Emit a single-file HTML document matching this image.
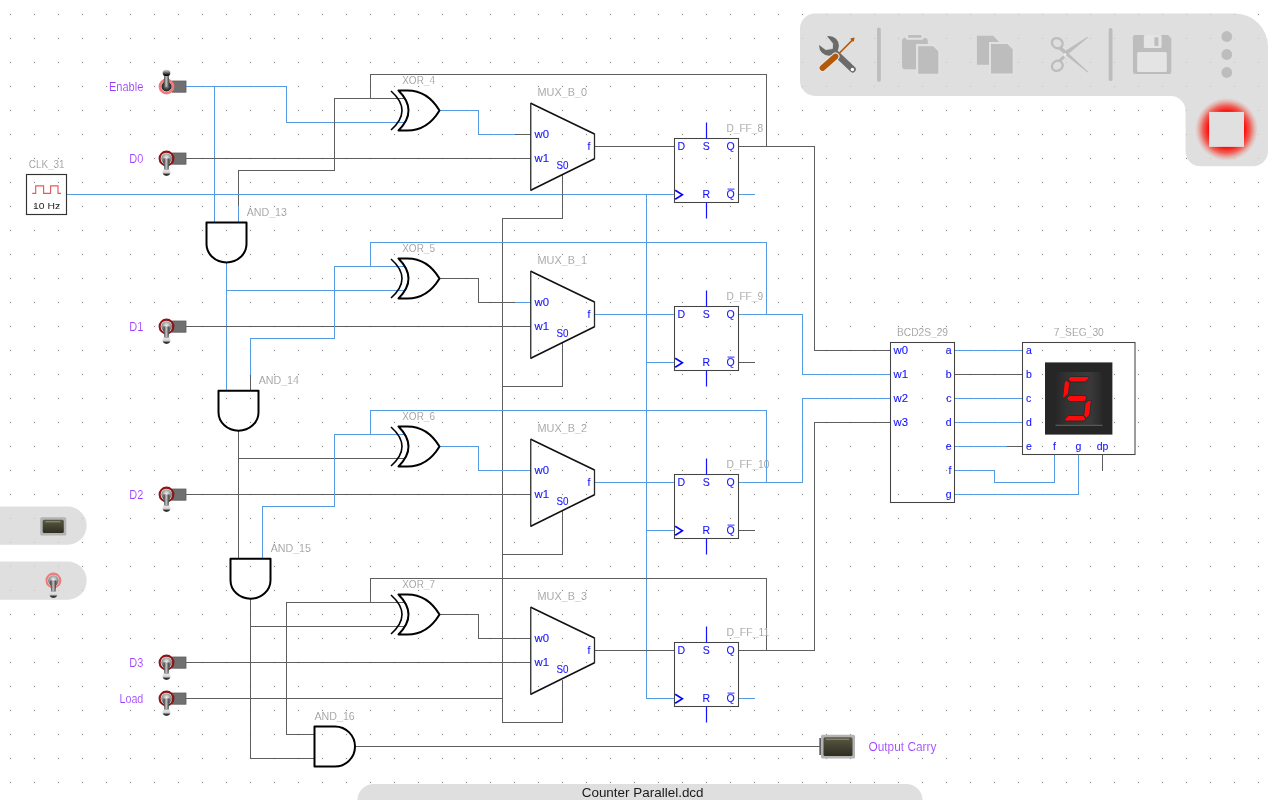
<!DOCTYPE html>
<html><head><meta charset="utf-8"><style>
html,body{margin:0;padding:0;background:#fff;width:1280px;height:800px;overflow:hidden}
svg{position:absolute;left:0;top:0;font-family:"Liberation Sans",sans-serif;will-change:transform}
</style></head><body>
<svg width="1280" height="800" viewBox="0 0 1280 800">
<defs>
<radialGradient id="tgDark" cx="0.5" cy="0.45" r="0.6"><stop offset="0" stop-color="#9a9a9a"/><stop offset="0.6" stop-color="#3a3a3a"/><stop offset="1" stop-color="#111"/></radialGradient>
<radialGradient id="tgLight" cx="0.5" cy="0.4" r="0.6"><stop offset="0" stop-color="#f0f0f0"/><stop offset="0.6" stop-color="#a0a0a0"/><stop offset="1" stop-color="#505050"/></radialGradient>
<linearGradient id="lev" x1="0" x2="1" y1="0" y2="0"><stop offset="0" stop-color="#222"/><stop offset="0.45" stop-color="#c8c8c8"/><stop offset="1" stop-color="#2a2a2a"/></linearGradient>
<linearGradient id="knob" x1="0" x2="0" y1="0" y2="1"><stop offset="0" stop-color="#8a8a8a"/><stop offset="0.25" stop-color="#e6e6e6"/><stop offset="0.55" stop-color="#cfcfcf"/><stop offset="0.8" stop-color="#3a3a3a"/><stop offset="1" stop-color="#000"/></linearGradient>
<linearGradient id="bez" x1="0" x2="1" y1="0" y2="0"><stop offset="0" stop-color="#262626"/><stop offset="0.25" stop-color="#333"/><stop offset="0.75" stop-color="#3a3a3a"/><stop offset="1" stop-color="#2a2a2a"/></linearGradient>
<linearGradient id="knobD" x1="0" x2="0" y1="0" y2="1"><stop offset="0" stop-color="#d8d8d8"/><stop offset="0.35" stop-color="#8a8a8a"/><stop offset="0.7" stop-color="#2a2a2a"/><stop offset="1" stop-color="#000"/></linearGradient>
<linearGradient id="ledg" x1="0" x2="0" y1="0" y2="1"><stop offset="0" stop-color="#5a5944"/><stop offset="1" stop-color="#2e2d20"/></linearGradient>
<radialGradient id="glow" cx="0.5" cy="0.5" r="0.5"><stop offset="0.55" stop-color="#ff0000" stop-opacity="1"/><stop offset="0.75" stop-color="#f42a1e" stop-opacity="0.7"/><stop offset="0.9" stop-color="#f04a3a" stop-opacity="0.25"/><stop offset="1" stop-color="#f05a4a" stop-opacity="0"/></radialGradient>
</defs>
<path d="M9 13h3v3h-3zM33 13h3v3h-3zM57 13h3v3h-3zM81 13h3v3h-3zM105 13h3v3h-3zM129 13h3v3h-3zM153 13h3v3h-3zM177 13h3v3h-3zM201 13h3v3h-3zM225 13h3v3h-3zM249 13h3v3h-3zM273 13h3v3h-3zM297 13h3v3h-3zM321 13h3v3h-3zM345 13h3v3h-3zM369 13h3v3h-3zM393 13h3v3h-3zM417 13h3v3h-3zM441 13h3v3h-3zM465 13h3v3h-3zM489 13h3v3h-3zM513 13h3v3h-3zM537 13h3v3h-3zM561 13h3v3h-3zM585 13h3v3h-3zM609 13h3v3h-3zM633 13h3v3h-3zM657 13h3v3h-3zM681 13h3v3h-3zM705 13h3v3h-3zM729 13h3v3h-3zM753 13h3v3h-3zM777 13h3v3h-3zM801 13h3v3h-3zM825 13h3v3h-3zM849 13h3v3h-3zM873 13h3v3h-3zM897 13h3v3h-3zM921 13h3v3h-3zM945 13h3v3h-3zM969 13h3v3h-3zM993 13h3v3h-3zM1017 13h3v3h-3zM1041 13h3v3h-3zM1065 13h3v3h-3zM1089 13h3v3h-3zM1113 13h3v3h-3zM1137 13h3v3h-3zM1161 13h3v3h-3zM1185 13h3v3h-3zM1209 13h3v3h-3zM1233 13h3v3h-3zM1257 13h3v3h-3zM1281 13h3v3h-3zM9 37h3v3h-3zM33 37h3v3h-3zM57 37h3v3h-3zM81 37h3v3h-3zM105 37h3v3h-3zM129 37h3v3h-3zM153 37h3v3h-3zM177 37h3v3h-3zM201 37h3v3h-3zM225 37h3v3h-3zM249 37h3v3h-3zM273 37h3v3h-3zM297 37h3v3h-3zM321 37h3v3h-3zM345 37h3v3h-3zM369 37h3v3h-3zM393 37h3v3h-3zM417 37h3v3h-3zM441 37h3v3h-3zM465 37h3v3h-3zM489 37h3v3h-3zM513 37h3v3h-3zM537 37h3v3h-3zM561 37h3v3h-3zM585 37h3v3h-3zM609 37h3v3h-3zM633 37h3v3h-3zM657 37h3v3h-3zM681 37h3v3h-3zM705 37h3v3h-3zM729 37h3v3h-3zM753 37h3v3h-3zM777 37h3v3h-3zM801 37h3v3h-3zM825 37h3v3h-3zM849 37h3v3h-3zM873 37h3v3h-3zM897 37h3v3h-3zM921 37h3v3h-3zM945 37h3v3h-3zM969 37h3v3h-3zM993 37h3v3h-3zM1017 37h3v3h-3zM1041 37h3v3h-3zM1065 37h3v3h-3zM1089 37h3v3h-3zM1113 37h3v3h-3zM1137 37h3v3h-3zM1161 37h3v3h-3zM1185 37h3v3h-3zM1209 37h3v3h-3zM1233 37h3v3h-3zM1257 37h3v3h-3zM1281 37h3v3h-3zM9 61h3v3h-3zM33 61h3v3h-3zM57 61h3v3h-3zM81 61h3v3h-3zM105 61h3v3h-3zM129 61h3v3h-3zM153 61h3v3h-3zM177 61h3v3h-3zM201 61h3v3h-3zM225 61h3v3h-3zM249 61h3v3h-3zM273 61h3v3h-3zM297 61h3v3h-3zM321 61h3v3h-3zM345 61h3v3h-3zM369 61h3v3h-3zM393 61h3v3h-3zM417 61h3v3h-3zM441 61h3v3h-3zM465 61h3v3h-3zM489 61h3v3h-3zM513 61h3v3h-3zM537 61h3v3h-3zM561 61h3v3h-3zM585 61h3v3h-3zM609 61h3v3h-3zM633 61h3v3h-3zM657 61h3v3h-3zM681 61h3v3h-3zM705 61h3v3h-3zM729 61h3v3h-3zM753 61h3v3h-3zM777 61h3v3h-3zM801 61h3v3h-3zM825 61h3v3h-3zM849 61h3v3h-3zM873 61h3v3h-3zM897 61h3v3h-3zM921 61h3v3h-3zM945 61h3v3h-3zM969 61h3v3h-3zM993 61h3v3h-3zM1017 61h3v3h-3zM1041 61h3v3h-3zM1065 61h3v3h-3zM1089 61h3v3h-3zM1113 61h3v3h-3zM1137 61h3v3h-3zM1161 61h3v3h-3zM1185 61h3v3h-3zM1209 61h3v3h-3zM1233 61h3v3h-3zM1257 61h3v3h-3zM1281 61h3v3h-3zM9 85h3v3h-3zM33 85h3v3h-3zM57 85h3v3h-3zM81 85h3v3h-3zM105 85h3v3h-3zM129 85h3v3h-3zM153 85h3v3h-3zM177 85h3v3h-3zM201 85h3v3h-3zM225 85h3v3h-3zM249 85h3v3h-3zM273 85h3v3h-3zM297 85h3v3h-3zM321 85h3v3h-3zM345 85h3v3h-3zM369 85h3v3h-3zM393 85h3v3h-3zM417 85h3v3h-3zM441 85h3v3h-3zM465 85h3v3h-3zM489 85h3v3h-3zM513 85h3v3h-3zM537 85h3v3h-3zM561 85h3v3h-3zM585 85h3v3h-3zM609 85h3v3h-3zM633 85h3v3h-3zM657 85h3v3h-3zM681 85h3v3h-3zM705 85h3v3h-3zM729 85h3v3h-3zM753 85h3v3h-3zM777 85h3v3h-3zM801 85h3v3h-3zM825 85h3v3h-3zM849 85h3v3h-3zM873 85h3v3h-3zM897 85h3v3h-3zM921 85h3v3h-3zM945 85h3v3h-3zM969 85h3v3h-3zM993 85h3v3h-3zM1017 85h3v3h-3zM1041 85h3v3h-3zM1065 85h3v3h-3zM1089 85h3v3h-3zM1113 85h3v3h-3zM1137 85h3v3h-3zM1161 85h3v3h-3zM1185 85h3v3h-3zM1209 85h3v3h-3zM1233 85h3v3h-3zM1257 85h3v3h-3zM1281 85h3v3h-3zM9 109h3v3h-3zM33 109h3v3h-3zM57 109h3v3h-3zM81 109h3v3h-3zM105 109h3v3h-3zM129 109h3v3h-3zM153 109h3v3h-3zM177 109h3v3h-3zM201 109h3v3h-3zM225 109h3v3h-3zM249 109h3v3h-3zM273 109h3v3h-3zM297 109h3v3h-3zM321 109h3v3h-3zM345 109h3v3h-3zM369 109h3v3h-3zM393 109h3v3h-3zM417 109h3v3h-3zM441 109h3v3h-3zM465 109h3v3h-3zM489 109h3v3h-3zM513 109h3v3h-3zM537 109h3v3h-3zM561 109h3v3h-3zM585 109h3v3h-3zM609 109h3v3h-3zM633 109h3v3h-3zM657 109h3v3h-3zM681 109h3v3h-3zM705 109h3v3h-3zM729 109h3v3h-3zM753 109h3v3h-3zM777 109h3v3h-3zM801 109h3v3h-3zM825 109h3v3h-3zM849 109h3v3h-3zM873 109h3v3h-3zM897 109h3v3h-3zM921 109h3v3h-3zM945 109h3v3h-3zM969 109h3v3h-3zM993 109h3v3h-3zM1017 109h3v3h-3zM1041 109h3v3h-3zM1065 109h3v3h-3zM1089 109h3v3h-3zM1113 109h3v3h-3zM1137 109h3v3h-3zM1161 109h3v3h-3zM1185 109h3v3h-3zM1209 109h3v3h-3zM1233 109h3v3h-3zM1257 109h3v3h-3zM1281 109h3v3h-3zM9 133h3v3h-3zM33 133h3v3h-3zM57 133h3v3h-3zM81 133h3v3h-3zM105 133h3v3h-3zM129 133h3v3h-3zM153 133h3v3h-3zM177 133h3v3h-3zM201 133h3v3h-3zM225 133h3v3h-3zM249 133h3v3h-3zM273 133h3v3h-3zM297 133h3v3h-3zM321 133h3v3h-3zM345 133h3v3h-3zM369 133h3v3h-3zM393 133h3v3h-3zM417 133h3v3h-3zM441 133h3v3h-3zM465 133h3v3h-3zM489 133h3v3h-3zM513 133h3v3h-3zM537 133h3v3h-3zM561 133h3v3h-3zM585 133h3v3h-3zM609 133h3v3h-3zM633 133h3v3h-3zM657 133h3v3h-3zM681 133h3v3h-3zM705 133h3v3h-3zM729 133h3v3h-3zM753 133h3v3h-3zM777 133h3v3h-3zM801 133h3v3h-3zM825 133h3v3h-3zM849 133h3v3h-3zM873 133h3v3h-3zM897 133h3v3h-3zM921 133h3v3h-3zM945 133h3v3h-3zM969 133h3v3h-3zM993 133h3v3h-3zM1017 133h3v3h-3zM1041 133h3v3h-3zM1065 133h3v3h-3zM1089 133h3v3h-3zM1113 133h3v3h-3zM1137 133h3v3h-3zM1161 133h3v3h-3zM1185 133h3v3h-3zM1209 133h3v3h-3zM1233 133h3v3h-3zM1257 133h3v3h-3zM1281 133h3v3h-3zM9 157h3v3h-3zM33 157h3v3h-3zM57 157h3v3h-3zM81 157h3v3h-3zM105 157h3v3h-3zM129 157h3v3h-3zM153 157h3v3h-3zM177 157h3v3h-3zM201 157h3v3h-3zM225 157h3v3h-3zM249 157h3v3h-3zM273 157h3v3h-3zM297 157h3v3h-3zM321 157h3v3h-3zM345 157h3v3h-3zM369 157h3v3h-3zM393 157h3v3h-3zM417 157h3v3h-3zM441 157h3v3h-3zM465 157h3v3h-3zM489 157h3v3h-3zM513 157h3v3h-3zM537 157h3v3h-3zM561 157h3v3h-3zM585 157h3v3h-3zM609 157h3v3h-3zM633 157h3v3h-3zM657 157h3v3h-3zM681 157h3v3h-3zM705 157h3v3h-3zM729 157h3v3h-3zM753 157h3v3h-3zM777 157h3v3h-3zM801 157h3v3h-3zM825 157h3v3h-3zM849 157h3v3h-3zM873 157h3v3h-3zM897 157h3v3h-3zM921 157h3v3h-3zM945 157h3v3h-3zM969 157h3v3h-3zM993 157h3v3h-3zM1017 157h3v3h-3zM1041 157h3v3h-3zM1065 157h3v3h-3zM1089 157h3v3h-3zM1113 157h3v3h-3zM1137 157h3v3h-3zM1161 157h3v3h-3zM1185 157h3v3h-3zM1209 157h3v3h-3zM1233 157h3v3h-3zM1257 157h3v3h-3zM1281 157h3v3h-3zM9 181h3v3h-3zM33 181h3v3h-3zM57 181h3v3h-3zM81 181h3v3h-3zM105 181h3v3h-3zM129 181h3v3h-3zM153 181h3v3h-3zM177 181h3v3h-3zM201 181h3v3h-3zM225 181h3v3h-3zM249 181h3v3h-3zM273 181h3v3h-3zM297 181h3v3h-3zM321 181h3v3h-3zM345 181h3v3h-3zM369 181h3v3h-3zM393 181h3v3h-3zM417 181h3v3h-3zM441 181h3v3h-3zM465 181h3v3h-3zM489 181h3v3h-3zM513 181h3v3h-3zM537 181h3v3h-3zM561 181h3v3h-3zM585 181h3v3h-3zM609 181h3v3h-3zM633 181h3v3h-3zM657 181h3v3h-3zM681 181h3v3h-3zM705 181h3v3h-3zM729 181h3v3h-3zM753 181h3v3h-3zM777 181h3v3h-3zM801 181h3v3h-3zM825 181h3v3h-3zM849 181h3v3h-3zM873 181h3v3h-3zM897 181h3v3h-3zM921 181h3v3h-3zM945 181h3v3h-3zM969 181h3v3h-3zM993 181h3v3h-3zM1017 181h3v3h-3zM1041 181h3v3h-3zM1065 181h3v3h-3zM1089 181h3v3h-3zM1113 181h3v3h-3zM1137 181h3v3h-3zM1161 181h3v3h-3zM1185 181h3v3h-3zM1209 181h3v3h-3zM1233 181h3v3h-3zM1257 181h3v3h-3zM1281 181h3v3h-3zM9 205h3v3h-3zM33 205h3v3h-3zM57 205h3v3h-3zM81 205h3v3h-3zM105 205h3v3h-3zM129 205h3v3h-3zM153 205h3v3h-3zM177 205h3v3h-3zM201 205h3v3h-3zM225 205h3v3h-3zM249 205h3v3h-3zM273 205h3v3h-3zM297 205h3v3h-3zM321 205h3v3h-3zM345 205h3v3h-3zM369 205h3v3h-3zM393 205h3v3h-3zM417 205h3v3h-3zM441 205h3v3h-3zM465 205h3v3h-3zM489 205h3v3h-3zM513 205h3v3h-3zM537 205h3v3h-3zM561 205h3v3h-3zM585 205h3v3h-3zM609 205h3v3h-3zM633 205h3v3h-3zM657 205h3v3h-3zM681 205h3v3h-3zM705 205h3v3h-3zM729 205h3v3h-3zM753 205h3v3h-3zM777 205h3v3h-3zM801 205h3v3h-3zM825 205h3v3h-3zM849 205h3v3h-3zM873 205h3v3h-3zM897 205h3v3h-3zM921 205h3v3h-3zM945 205h3v3h-3zM969 205h3v3h-3zM993 205h3v3h-3zM1017 205h3v3h-3zM1041 205h3v3h-3zM1065 205h3v3h-3zM1089 205h3v3h-3zM1113 205h3v3h-3zM1137 205h3v3h-3zM1161 205h3v3h-3zM1185 205h3v3h-3zM1209 205h3v3h-3zM1233 205h3v3h-3zM1257 205h3v3h-3zM1281 205h3v3h-3zM9 229h3v3h-3zM33 229h3v3h-3zM57 229h3v3h-3zM81 229h3v3h-3zM105 229h3v3h-3zM129 229h3v3h-3zM153 229h3v3h-3zM177 229h3v3h-3zM201 229h3v3h-3zM225 229h3v3h-3zM249 229h3v3h-3zM273 229h3v3h-3zM297 229h3v3h-3zM321 229h3v3h-3zM345 229h3v3h-3zM369 229h3v3h-3zM393 229h3v3h-3zM417 229h3v3h-3zM441 229h3v3h-3zM465 229h3v3h-3zM489 229h3v3h-3zM513 229h3v3h-3zM537 229h3v3h-3zM561 229h3v3h-3zM585 229h3v3h-3zM609 229h3v3h-3zM633 229h3v3h-3zM657 229h3v3h-3zM681 229h3v3h-3zM705 229h3v3h-3zM729 229h3v3h-3zM753 229h3v3h-3zM777 229h3v3h-3zM801 229h3v3h-3zM825 229h3v3h-3zM849 229h3v3h-3zM873 229h3v3h-3zM897 229h3v3h-3zM921 229h3v3h-3zM945 229h3v3h-3zM969 229h3v3h-3zM993 229h3v3h-3zM1017 229h3v3h-3zM1041 229h3v3h-3zM1065 229h3v3h-3zM1089 229h3v3h-3zM1113 229h3v3h-3zM1137 229h3v3h-3zM1161 229h3v3h-3zM1185 229h3v3h-3zM1209 229h3v3h-3zM1233 229h3v3h-3zM1257 229h3v3h-3zM1281 229h3v3h-3zM9 253h3v3h-3zM33 253h3v3h-3zM57 253h3v3h-3zM81 253h3v3h-3zM105 253h3v3h-3zM129 253h3v3h-3zM153 253h3v3h-3zM177 253h3v3h-3zM201 253h3v3h-3zM225 253h3v3h-3zM249 253h3v3h-3zM273 253h3v3h-3zM297 253h3v3h-3zM321 253h3v3h-3zM345 253h3v3h-3zM369 253h3v3h-3zM393 253h3v3h-3zM417 253h3v3h-3zM441 253h3v3h-3zM465 253h3v3h-3zM489 253h3v3h-3zM513 253h3v3h-3zM537 253h3v3h-3zM561 253h3v3h-3zM585 253h3v3h-3zM609 253h3v3h-3zM633 253h3v3h-3zM657 253h3v3h-3zM681 253h3v3h-3zM705 253h3v3h-3zM729 253h3v3h-3zM753 253h3v3h-3zM777 253h3v3h-3zM801 253h3v3h-3zM825 253h3v3h-3zM849 253h3v3h-3zM873 253h3v3h-3zM897 253h3v3h-3zM921 253h3v3h-3zM945 253h3v3h-3zM969 253h3v3h-3zM993 253h3v3h-3zM1017 253h3v3h-3zM1041 253h3v3h-3zM1065 253h3v3h-3zM1089 253h3v3h-3zM1113 253h3v3h-3zM1137 253h3v3h-3zM1161 253h3v3h-3zM1185 253h3v3h-3zM1209 253h3v3h-3zM1233 253h3v3h-3zM1257 253h3v3h-3zM1281 253h3v3h-3zM9 277h3v3h-3zM33 277h3v3h-3zM57 277h3v3h-3zM81 277h3v3h-3zM105 277h3v3h-3zM129 277h3v3h-3zM153 277h3v3h-3zM177 277h3v3h-3zM201 277h3v3h-3zM225 277h3v3h-3zM249 277h3v3h-3zM273 277h3v3h-3zM297 277h3v3h-3zM321 277h3v3h-3zM345 277h3v3h-3zM369 277h3v3h-3zM393 277h3v3h-3zM417 277h3v3h-3zM441 277h3v3h-3zM465 277h3v3h-3zM489 277h3v3h-3zM513 277h3v3h-3zM537 277h3v3h-3zM561 277h3v3h-3zM585 277h3v3h-3zM609 277h3v3h-3zM633 277h3v3h-3zM657 277h3v3h-3zM681 277h3v3h-3zM705 277h3v3h-3zM729 277h3v3h-3zM753 277h3v3h-3zM777 277h3v3h-3zM801 277h3v3h-3zM825 277h3v3h-3zM849 277h3v3h-3zM873 277h3v3h-3zM897 277h3v3h-3zM921 277h3v3h-3zM945 277h3v3h-3zM969 277h3v3h-3zM993 277h3v3h-3zM1017 277h3v3h-3zM1041 277h3v3h-3zM1065 277h3v3h-3zM1089 277h3v3h-3zM1113 277h3v3h-3zM1137 277h3v3h-3zM1161 277h3v3h-3zM1185 277h3v3h-3zM1209 277h3v3h-3zM1233 277h3v3h-3zM1257 277h3v3h-3zM1281 277h3v3h-3zM9 301h3v3h-3zM33 301h3v3h-3zM57 301h3v3h-3zM81 301h3v3h-3zM105 301h3v3h-3zM129 301h3v3h-3zM153 301h3v3h-3zM177 301h3v3h-3zM201 301h3v3h-3zM225 301h3v3h-3zM249 301h3v3h-3zM273 301h3v3h-3zM297 301h3v3h-3zM321 301h3v3h-3zM345 301h3v3h-3zM369 301h3v3h-3zM393 301h3v3h-3zM417 301h3v3h-3zM441 301h3v3h-3zM465 301h3v3h-3zM489 301h3v3h-3zM513 301h3v3h-3zM537 301h3v3h-3zM561 301h3v3h-3zM585 301h3v3h-3zM609 301h3v3h-3zM633 301h3v3h-3zM657 301h3v3h-3zM681 301h3v3h-3zM705 301h3v3h-3zM729 301h3v3h-3zM753 301h3v3h-3zM777 301h3v3h-3zM801 301h3v3h-3zM825 301h3v3h-3zM849 301h3v3h-3zM873 301h3v3h-3zM897 301h3v3h-3zM921 301h3v3h-3zM945 301h3v3h-3zM969 301h3v3h-3zM993 301h3v3h-3zM1017 301h3v3h-3zM1041 301h3v3h-3zM1065 301h3v3h-3zM1089 301h3v3h-3zM1113 301h3v3h-3zM1137 301h3v3h-3zM1161 301h3v3h-3zM1185 301h3v3h-3zM1209 301h3v3h-3zM1233 301h3v3h-3zM1257 301h3v3h-3zM1281 301h3v3h-3zM9 325h3v3h-3zM33 325h3v3h-3zM57 325h3v3h-3zM81 325h3v3h-3zM105 325h3v3h-3zM129 325h3v3h-3zM153 325h3v3h-3zM177 325h3v3h-3zM201 325h3v3h-3zM225 325h3v3h-3zM249 325h3v3h-3zM273 325h3v3h-3zM297 325h3v3h-3zM321 325h3v3h-3zM345 325h3v3h-3zM369 325h3v3h-3zM393 325h3v3h-3zM417 325h3v3h-3zM441 325h3v3h-3zM465 325h3v3h-3zM489 325h3v3h-3zM513 325h3v3h-3zM537 325h3v3h-3zM561 325h3v3h-3zM585 325h3v3h-3zM609 325h3v3h-3zM633 325h3v3h-3zM657 325h3v3h-3zM681 325h3v3h-3zM705 325h3v3h-3zM729 325h3v3h-3zM753 325h3v3h-3zM777 325h3v3h-3zM801 325h3v3h-3zM825 325h3v3h-3zM849 325h3v3h-3zM873 325h3v3h-3zM897 325h3v3h-3zM921 325h3v3h-3zM945 325h3v3h-3zM969 325h3v3h-3zM993 325h3v3h-3zM1017 325h3v3h-3zM1041 325h3v3h-3zM1065 325h3v3h-3zM1089 325h3v3h-3zM1113 325h3v3h-3zM1137 325h3v3h-3zM1161 325h3v3h-3zM1185 325h3v3h-3zM1209 325h3v3h-3zM1233 325h3v3h-3zM1257 325h3v3h-3zM1281 325h3v3h-3zM9 349h3v3h-3zM33 349h3v3h-3zM57 349h3v3h-3zM81 349h3v3h-3zM105 349h3v3h-3zM129 349h3v3h-3zM153 349h3v3h-3zM177 349h3v3h-3zM201 349h3v3h-3zM225 349h3v3h-3zM249 349h3v3h-3zM273 349h3v3h-3zM297 349h3v3h-3zM321 349h3v3h-3zM345 349h3v3h-3zM369 349h3v3h-3zM393 349h3v3h-3zM417 349h3v3h-3zM441 349h3v3h-3zM465 349h3v3h-3zM489 349h3v3h-3zM513 349h3v3h-3zM537 349h3v3h-3zM561 349h3v3h-3zM585 349h3v3h-3zM609 349h3v3h-3zM633 349h3v3h-3zM657 349h3v3h-3zM681 349h3v3h-3zM705 349h3v3h-3zM729 349h3v3h-3zM753 349h3v3h-3zM777 349h3v3h-3zM801 349h3v3h-3zM825 349h3v3h-3zM849 349h3v3h-3zM873 349h3v3h-3zM897 349h3v3h-3zM921 349h3v3h-3zM945 349h3v3h-3zM969 349h3v3h-3zM993 349h3v3h-3zM1017 349h3v3h-3zM1041 349h3v3h-3zM1065 349h3v3h-3zM1089 349h3v3h-3zM1113 349h3v3h-3zM1137 349h3v3h-3zM1161 349h3v3h-3zM1185 349h3v3h-3zM1209 349h3v3h-3zM1233 349h3v3h-3zM1257 349h3v3h-3zM1281 349h3v3h-3zM9 373h3v3h-3zM33 373h3v3h-3zM57 373h3v3h-3zM81 373h3v3h-3zM105 373h3v3h-3zM129 373h3v3h-3zM153 373h3v3h-3zM177 373h3v3h-3zM201 373h3v3h-3zM225 373h3v3h-3zM249 373h3v3h-3zM273 373h3v3h-3zM297 373h3v3h-3zM321 373h3v3h-3zM345 373h3v3h-3zM369 373h3v3h-3zM393 373h3v3h-3zM417 373h3v3h-3zM441 373h3v3h-3zM465 373h3v3h-3zM489 373h3v3h-3zM513 373h3v3h-3zM537 373h3v3h-3zM561 373h3v3h-3zM585 373h3v3h-3zM609 373h3v3h-3zM633 373h3v3h-3zM657 373h3v3h-3zM681 373h3v3h-3zM705 373h3v3h-3zM729 373h3v3h-3zM753 373h3v3h-3zM777 373h3v3h-3zM801 373h3v3h-3zM825 373h3v3h-3zM849 373h3v3h-3zM873 373h3v3h-3zM897 373h3v3h-3zM921 373h3v3h-3zM945 373h3v3h-3zM969 373h3v3h-3zM993 373h3v3h-3zM1017 373h3v3h-3zM1041 373h3v3h-3zM1065 373h3v3h-3zM1089 373h3v3h-3zM1113 373h3v3h-3zM1137 373h3v3h-3zM1161 373h3v3h-3zM1185 373h3v3h-3zM1209 373h3v3h-3zM1233 373h3v3h-3zM1257 373h3v3h-3zM1281 373h3v3h-3zM9 397h3v3h-3zM33 397h3v3h-3zM57 397h3v3h-3zM81 397h3v3h-3zM105 397h3v3h-3zM129 397h3v3h-3zM153 397h3v3h-3zM177 397h3v3h-3zM201 397h3v3h-3zM225 397h3v3h-3zM249 397h3v3h-3zM273 397h3v3h-3zM297 397h3v3h-3zM321 397h3v3h-3zM345 397h3v3h-3zM369 397h3v3h-3zM393 397h3v3h-3zM417 397h3v3h-3zM441 397h3v3h-3zM465 397h3v3h-3zM489 397h3v3h-3zM513 397h3v3h-3zM537 397h3v3h-3zM561 397h3v3h-3zM585 397h3v3h-3zM609 397h3v3h-3zM633 397h3v3h-3zM657 397h3v3h-3zM681 397h3v3h-3zM705 397h3v3h-3zM729 397h3v3h-3zM753 397h3v3h-3zM777 397h3v3h-3zM801 397h3v3h-3zM825 397h3v3h-3zM849 397h3v3h-3zM873 397h3v3h-3zM897 397h3v3h-3zM921 397h3v3h-3zM945 397h3v3h-3zM969 397h3v3h-3zM993 397h3v3h-3zM1017 397h3v3h-3zM1041 397h3v3h-3zM1065 397h3v3h-3zM1089 397h3v3h-3zM1113 397h3v3h-3zM1137 397h3v3h-3zM1161 397h3v3h-3zM1185 397h3v3h-3zM1209 397h3v3h-3zM1233 397h3v3h-3zM1257 397h3v3h-3zM1281 397h3v3h-3zM9 421h3v3h-3zM33 421h3v3h-3zM57 421h3v3h-3zM81 421h3v3h-3zM105 421h3v3h-3zM129 421h3v3h-3zM153 421h3v3h-3zM177 421h3v3h-3zM201 421h3v3h-3zM225 421h3v3h-3zM249 421h3v3h-3zM273 421h3v3h-3zM297 421h3v3h-3zM321 421h3v3h-3zM345 421h3v3h-3zM369 421h3v3h-3zM393 421h3v3h-3zM417 421h3v3h-3zM441 421h3v3h-3zM465 421h3v3h-3zM489 421h3v3h-3zM513 421h3v3h-3zM537 421h3v3h-3zM561 421h3v3h-3zM585 421h3v3h-3zM609 421h3v3h-3zM633 421h3v3h-3zM657 421h3v3h-3zM681 421h3v3h-3zM705 421h3v3h-3zM729 421h3v3h-3zM753 421h3v3h-3zM777 421h3v3h-3zM801 421h3v3h-3zM825 421h3v3h-3zM849 421h3v3h-3zM873 421h3v3h-3zM897 421h3v3h-3zM921 421h3v3h-3zM945 421h3v3h-3zM969 421h3v3h-3zM993 421h3v3h-3zM1017 421h3v3h-3zM1041 421h3v3h-3zM1065 421h3v3h-3zM1089 421h3v3h-3zM1113 421h3v3h-3zM1137 421h3v3h-3zM1161 421h3v3h-3zM1185 421h3v3h-3zM1209 421h3v3h-3zM1233 421h3v3h-3zM1257 421h3v3h-3zM1281 421h3v3h-3zM9 445h3v3h-3zM33 445h3v3h-3zM57 445h3v3h-3zM81 445h3v3h-3zM105 445h3v3h-3zM129 445h3v3h-3zM153 445h3v3h-3zM177 445h3v3h-3zM201 445h3v3h-3zM225 445h3v3h-3zM249 445h3v3h-3zM273 445h3v3h-3zM297 445h3v3h-3zM321 445h3v3h-3zM345 445h3v3h-3zM369 445h3v3h-3zM393 445h3v3h-3zM417 445h3v3h-3zM441 445h3v3h-3zM465 445h3v3h-3zM489 445h3v3h-3zM513 445h3v3h-3zM537 445h3v3h-3zM561 445h3v3h-3zM585 445h3v3h-3zM609 445h3v3h-3zM633 445h3v3h-3zM657 445h3v3h-3zM681 445h3v3h-3zM705 445h3v3h-3zM729 445h3v3h-3zM753 445h3v3h-3zM777 445h3v3h-3zM801 445h3v3h-3zM825 445h3v3h-3zM849 445h3v3h-3zM873 445h3v3h-3zM897 445h3v3h-3zM921 445h3v3h-3zM945 445h3v3h-3zM969 445h3v3h-3zM993 445h3v3h-3zM1017 445h3v3h-3zM1041 445h3v3h-3zM1065 445h3v3h-3zM1089 445h3v3h-3zM1113 445h3v3h-3zM1137 445h3v3h-3zM1161 445h3v3h-3zM1185 445h3v3h-3zM1209 445h3v3h-3zM1233 445h3v3h-3zM1257 445h3v3h-3zM1281 445h3v3h-3zM9 469h3v3h-3zM33 469h3v3h-3zM57 469h3v3h-3zM81 469h3v3h-3zM105 469h3v3h-3zM129 469h3v3h-3zM153 469h3v3h-3zM177 469h3v3h-3zM201 469h3v3h-3zM225 469h3v3h-3zM249 469h3v3h-3zM273 469h3v3h-3zM297 469h3v3h-3zM321 469h3v3h-3zM345 469h3v3h-3zM369 469h3v3h-3zM393 469h3v3h-3zM417 469h3v3h-3zM441 469h3v3h-3zM465 469h3v3h-3zM489 469h3v3h-3zM513 469h3v3h-3zM537 469h3v3h-3zM561 469h3v3h-3zM585 469h3v3h-3zM609 469h3v3h-3zM633 469h3v3h-3zM657 469h3v3h-3zM681 469h3v3h-3zM705 469h3v3h-3zM729 469h3v3h-3zM753 469h3v3h-3zM777 469h3v3h-3zM801 469h3v3h-3zM825 469h3v3h-3zM849 469h3v3h-3zM873 469h3v3h-3zM897 469h3v3h-3zM921 469h3v3h-3zM945 469h3v3h-3zM969 469h3v3h-3zM993 469h3v3h-3zM1017 469h3v3h-3zM1041 469h3v3h-3zM1065 469h3v3h-3zM1089 469h3v3h-3zM1113 469h3v3h-3zM1137 469h3v3h-3zM1161 469h3v3h-3zM1185 469h3v3h-3zM1209 469h3v3h-3zM1233 469h3v3h-3zM1257 469h3v3h-3zM1281 469h3v3h-3zM9 493h3v3h-3zM33 493h3v3h-3zM57 493h3v3h-3zM81 493h3v3h-3zM105 493h3v3h-3zM129 493h3v3h-3zM153 493h3v3h-3zM177 493h3v3h-3zM201 493h3v3h-3zM225 493h3v3h-3zM249 493h3v3h-3zM273 493h3v3h-3zM297 493h3v3h-3zM321 493h3v3h-3zM345 493h3v3h-3zM369 493h3v3h-3zM393 493h3v3h-3zM417 493h3v3h-3zM441 493h3v3h-3zM465 493h3v3h-3zM489 493h3v3h-3zM513 493h3v3h-3zM537 493h3v3h-3zM561 493h3v3h-3zM585 493h3v3h-3zM609 493h3v3h-3zM633 493h3v3h-3zM657 493h3v3h-3zM681 493h3v3h-3zM705 493h3v3h-3zM729 493h3v3h-3zM753 493h3v3h-3zM777 493h3v3h-3zM801 493h3v3h-3zM825 493h3v3h-3zM849 493h3v3h-3zM873 493h3v3h-3zM897 493h3v3h-3zM921 493h3v3h-3zM945 493h3v3h-3zM969 493h3v3h-3zM993 493h3v3h-3zM1017 493h3v3h-3zM1041 493h3v3h-3zM1065 493h3v3h-3zM1089 493h3v3h-3zM1113 493h3v3h-3zM1137 493h3v3h-3zM1161 493h3v3h-3zM1185 493h3v3h-3zM1209 493h3v3h-3zM1233 493h3v3h-3zM1257 493h3v3h-3zM1281 493h3v3h-3zM9 517h3v3h-3zM33 517h3v3h-3zM57 517h3v3h-3zM81 517h3v3h-3zM105 517h3v3h-3zM129 517h3v3h-3zM153 517h3v3h-3zM177 517h3v3h-3zM201 517h3v3h-3zM225 517h3v3h-3zM249 517h3v3h-3zM273 517h3v3h-3zM297 517h3v3h-3zM321 517h3v3h-3zM345 517h3v3h-3zM369 517h3v3h-3zM393 517h3v3h-3zM417 517h3v3h-3zM441 517h3v3h-3zM465 517h3v3h-3zM489 517h3v3h-3zM513 517h3v3h-3zM537 517h3v3h-3zM561 517h3v3h-3zM585 517h3v3h-3zM609 517h3v3h-3zM633 517h3v3h-3zM657 517h3v3h-3zM681 517h3v3h-3zM705 517h3v3h-3zM729 517h3v3h-3zM753 517h3v3h-3zM777 517h3v3h-3zM801 517h3v3h-3zM825 517h3v3h-3zM849 517h3v3h-3zM873 517h3v3h-3zM897 517h3v3h-3zM921 517h3v3h-3zM945 517h3v3h-3zM969 517h3v3h-3zM993 517h3v3h-3zM1017 517h3v3h-3zM1041 517h3v3h-3zM1065 517h3v3h-3zM1089 517h3v3h-3zM1113 517h3v3h-3zM1137 517h3v3h-3zM1161 517h3v3h-3zM1185 517h3v3h-3zM1209 517h3v3h-3zM1233 517h3v3h-3zM1257 517h3v3h-3zM1281 517h3v3h-3zM9 541h3v3h-3zM33 541h3v3h-3zM57 541h3v3h-3zM81 541h3v3h-3zM105 541h3v3h-3zM129 541h3v3h-3zM153 541h3v3h-3zM177 541h3v3h-3zM201 541h3v3h-3zM225 541h3v3h-3zM249 541h3v3h-3zM273 541h3v3h-3zM297 541h3v3h-3zM321 541h3v3h-3zM345 541h3v3h-3zM369 541h3v3h-3zM393 541h3v3h-3zM417 541h3v3h-3zM441 541h3v3h-3zM465 541h3v3h-3zM489 541h3v3h-3zM513 541h3v3h-3zM537 541h3v3h-3zM561 541h3v3h-3zM585 541h3v3h-3zM609 541h3v3h-3zM633 541h3v3h-3zM657 541h3v3h-3zM681 541h3v3h-3zM705 541h3v3h-3zM729 541h3v3h-3zM753 541h3v3h-3zM777 541h3v3h-3zM801 541h3v3h-3zM825 541h3v3h-3zM849 541h3v3h-3zM873 541h3v3h-3zM897 541h3v3h-3zM921 541h3v3h-3zM945 541h3v3h-3zM969 541h3v3h-3zM993 541h3v3h-3zM1017 541h3v3h-3zM1041 541h3v3h-3zM1065 541h3v3h-3zM1089 541h3v3h-3zM1113 541h3v3h-3zM1137 541h3v3h-3zM1161 541h3v3h-3zM1185 541h3v3h-3zM1209 541h3v3h-3zM1233 541h3v3h-3zM1257 541h3v3h-3zM1281 541h3v3h-3zM9 565h3v3h-3zM33 565h3v3h-3zM57 565h3v3h-3zM81 565h3v3h-3zM105 565h3v3h-3zM129 565h3v3h-3zM153 565h3v3h-3zM177 565h3v3h-3zM201 565h3v3h-3zM225 565h3v3h-3zM249 565h3v3h-3zM273 565h3v3h-3zM297 565h3v3h-3zM321 565h3v3h-3zM345 565h3v3h-3zM369 565h3v3h-3zM393 565h3v3h-3zM417 565h3v3h-3zM441 565h3v3h-3zM465 565h3v3h-3zM489 565h3v3h-3zM513 565h3v3h-3zM537 565h3v3h-3zM561 565h3v3h-3zM585 565h3v3h-3zM609 565h3v3h-3zM633 565h3v3h-3zM657 565h3v3h-3zM681 565h3v3h-3zM705 565h3v3h-3zM729 565h3v3h-3zM753 565h3v3h-3zM777 565h3v3h-3zM801 565h3v3h-3zM825 565h3v3h-3zM849 565h3v3h-3zM873 565h3v3h-3zM897 565h3v3h-3zM921 565h3v3h-3zM945 565h3v3h-3zM969 565h3v3h-3zM993 565h3v3h-3zM1017 565h3v3h-3zM1041 565h3v3h-3zM1065 565h3v3h-3zM1089 565h3v3h-3zM1113 565h3v3h-3zM1137 565h3v3h-3zM1161 565h3v3h-3zM1185 565h3v3h-3zM1209 565h3v3h-3zM1233 565h3v3h-3zM1257 565h3v3h-3zM1281 565h3v3h-3zM9 589h3v3h-3zM33 589h3v3h-3zM57 589h3v3h-3zM81 589h3v3h-3zM105 589h3v3h-3zM129 589h3v3h-3zM153 589h3v3h-3zM177 589h3v3h-3zM201 589h3v3h-3zM225 589h3v3h-3zM249 589h3v3h-3zM273 589h3v3h-3zM297 589h3v3h-3zM321 589h3v3h-3zM345 589h3v3h-3zM369 589h3v3h-3zM393 589h3v3h-3zM417 589h3v3h-3zM441 589h3v3h-3zM465 589h3v3h-3zM489 589h3v3h-3zM513 589h3v3h-3zM537 589h3v3h-3zM561 589h3v3h-3zM585 589h3v3h-3zM609 589h3v3h-3zM633 589h3v3h-3zM657 589h3v3h-3zM681 589h3v3h-3zM705 589h3v3h-3zM729 589h3v3h-3zM753 589h3v3h-3zM777 589h3v3h-3zM801 589h3v3h-3zM825 589h3v3h-3zM849 589h3v3h-3zM873 589h3v3h-3zM897 589h3v3h-3zM921 589h3v3h-3zM945 589h3v3h-3zM969 589h3v3h-3zM993 589h3v3h-3zM1017 589h3v3h-3zM1041 589h3v3h-3zM1065 589h3v3h-3zM1089 589h3v3h-3zM1113 589h3v3h-3zM1137 589h3v3h-3zM1161 589h3v3h-3zM1185 589h3v3h-3zM1209 589h3v3h-3zM1233 589h3v3h-3zM1257 589h3v3h-3zM1281 589h3v3h-3zM9 613h3v3h-3zM33 613h3v3h-3zM57 613h3v3h-3zM81 613h3v3h-3zM105 613h3v3h-3zM129 613h3v3h-3zM153 613h3v3h-3zM177 613h3v3h-3zM201 613h3v3h-3zM225 613h3v3h-3zM249 613h3v3h-3zM273 613h3v3h-3zM297 613h3v3h-3zM321 613h3v3h-3zM345 613h3v3h-3zM369 613h3v3h-3zM393 613h3v3h-3zM417 613h3v3h-3zM441 613h3v3h-3zM465 613h3v3h-3zM489 613h3v3h-3zM513 613h3v3h-3zM537 613h3v3h-3zM561 613h3v3h-3zM585 613h3v3h-3zM609 613h3v3h-3zM633 613h3v3h-3zM657 613h3v3h-3zM681 613h3v3h-3zM705 613h3v3h-3zM729 613h3v3h-3zM753 613h3v3h-3zM777 613h3v3h-3zM801 613h3v3h-3zM825 613h3v3h-3zM849 613h3v3h-3zM873 613h3v3h-3zM897 613h3v3h-3zM921 613h3v3h-3zM945 613h3v3h-3zM969 613h3v3h-3zM993 613h3v3h-3zM1017 613h3v3h-3zM1041 613h3v3h-3zM1065 613h3v3h-3zM1089 613h3v3h-3zM1113 613h3v3h-3zM1137 613h3v3h-3zM1161 613h3v3h-3zM1185 613h3v3h-3zM1209 613h3v3h-3zM1233 613h3v3h-3zM1257 613h3v3h-3zM1281 613h3v3h-3zM9 637h3v3h-3zM33 637h3v3h-3zM57 637h3v3h-3zM81 637h3v3h-3zM105 637h3v3h-3zM129 637h3v3h-3zM153 637h3v3h-3zM177 637h3v3h-3zM201 637h3v3h-3zM225 637h3v3h-3zM249 637h3v3h-3zM273 637h3v3h-3zM297 637h3v3h-3zM321 637h3v3h-3zM345 637h3v3h-3zM369 637h3v3h-3zM393 637h3v3h-3zM417 637h3v3h-3zM441 637h3v3h-3zM465 637h3v3h-3zM489 637h3v3h-3zM513 637h3v3h-3zM537 637h3v3h-3zM561 637h3v3h-3zM585 637h3v3h-3zM609 637h3v3h-3zM633 637h3v3h-3zM657 637h3v3h-3zM681 637h3v3h-3zM705 637h3v3h-3zM729 637h3v3h-3zM753 637h3v3h-3zM777 637h3v3h-3zM801 637h3v3h-3zM825 637h3v3h-3zM849 637h3v3h-3zM873 637h3v3h-3zM897 637h3v3h-3zM921 637h3v3h-3zM945 637h3v3h-3zM969 637h3v3h-3zM993 637h3v3h-3zM1017 637h3v3h-3zM1041 637h3v3h-3zM1065 637h3v3h-3zM1089 637h3v3h-3zM1113 637h3v3h-3zM1137 637h3v3h-3zM1161 637h3v3h-3zM1185 637h3v3h-3zM1209 637h3v3h-3zM1233 637h3v3h-3zM1257 637h3v3h-3zM1281 637h3v3h-3zM9 661h3v3h-3zM33 661h3v3h-3zM57 661h3v3h-3zM81 661h3v3h-3zM105 661h3v3h-3zM129 661h3v3h-3zM153 661h3v3h-3zM177 661h3v3h-3zM201 661h3v3h-3zM225 661h3v3h-3zM249 661h3v3h-3zM273 661h3v3h-3zM297 661h3v3h-3zM321 661h3v3h-3zM345 661h3v3h-3zM369 661h3v3h-3zM393 661h3v3h-3zM417 661h3v3h-3zM441 661h3v3h-3zM465 661h3v3h-3zM489 661h3v3h-3zM513 661h3v3h-3zM537 661h3v3h-3zM561 661h3v3h-3zM585 661h3v3h-3zM609 661h3v3h-3zM633 661h3v3h-3zM657 661h3v3h-3zM681 661h3v3h-3zM705 661h3v3h-3zM729 661h3v3h-3zM753 661h3v3h-3zM777 661h3v3h-3zM801 661h3v3h-3zM825 661h3v3h-3zM849 661h3v3h-3zM873 661h3v3h-3zM897 661h3v3h-3zM921 661h3v3h-3zM945 661h3v3h-3zM969 661h3v3h-3zM993 661h3v3h-3zM1017 661h3v3h-3zM1041 661h3v3h-3zM1065 661h3v3h-3zM1089 661h3v3h-3zM1113 661h3v3h-3zM1137 661h3v3h-3zM1161 661h3v3h-3zM1185 661h3v3h-3zM1209 661h3v3h-3zM1233 661h3v3h-3zM1257 661h3v3h-3zM1281 661h3v3h-3zM9 685h3v3h-3zM33 685h3v3h-3zM57 685h3v3h-3zM81 685h3v3h-3zM105 685h3v3h-3zM129 685h3v3h-3zM153 685h3v3h-3zM177 685h3v3h-3zM201 685h3v3h-3zM225 685h3v3h-3zM249 685h3v3h-3zM273 685h3v3h-3zM297 685h3v3h-3zM321 685h3v3h-3zM345 685h3v3h-3zM369 685h3v3h-3zM393 685h3v3h-3zM417 685h3v3h-3zM441 685h3v3h-3zM465 685h3v3h-3zM489 685h3v3h-3zM513 685h3v3h-3zM537 685h3v3h-3zM561 685h3v3h-3zM585 685h3v3h-3zM609 685h3v3h-3zM633 685h3v3h-3zM657 685h3v3h-3zM681 685h3v3h-3zM705 685h3v3h-3zM729 685h3v3h-3zM753 685h3v3h-3zM777 685h3v3h-3zM801 685h3v3h-3zM825 685h3v3h-3zM849 685h3v3h-3zM873 685h3v3h-3zM897 685h3v3h-3zM921 685h3v3h-3zM945 685h3v3h-3zM969 685h3v3h-3zM993 685h3v3h-3zM1017 685h3v3h-3zM1041 685h3v3h-3zM1065 685h3v3h-3zM1089 685h3v3h-3zM1113 685h3v3h-3zM1137 685h3v3h-3zM1161 685h3v3h-3zM1185 685h3v3h-3zM1209 685h3v3h-3zM1233 685h3v3h-3zM1257 685h3v3h-3zM1281 685h3v3h-3zM9 709h3v3h-3zM33 709h3v3h-3zM57 709h3v3h-3zM81 709h3v3h-3zM105 709h3v3h-3zM129 709h3v3h-3zM153 709h3v3h-3zM177 709h3v3h-3zM201 709h3v3h-3zM225 709h3v3h-3zM249 709h3v3h-3zM273 709h3v3h-3zM297 709h3v3h-3zM321 709h3v3h-3zM345 709h3v3h-3zM369 709h3v3h-3zM393 709h3v3h-3zM417 709h3v3h-3zM441 709h3v3h-3zM465 709h3v3h-3zM489 709h3v3h-3zM513 709h3v3h-3zM537 709h3v3h-3zM561 709h3v3h-3zM585 709h3v3h-3zM609 709h3v3h-3zM633 709h3v3h-3zM657 709h3v3h-3zM681 709h3v3h-3zM705 709h3v3h-3zM729 709h3v3h-3zM753 709h3v3h-3zM777 709h3v3h-3zM801 709h3v3h-3zM825 709h3v3h-3zM849 709h3v3h-3zM873 709h3v3h-3zM897 709h3v3h-3zM921 709h3v3h-3zM945 709h3v3h-3zM969 709h3v3h-3zM993 709h3v3h-3zM1017 709h3v3h-3zM1041 709h3v3h-3zM1065 709h3v3h-3zM1089 709h3v3h-3zM1113 709h3v3h-3zM1137 709h3v3h-3zM1161 709h3v3h-3zM1185 709h3v3h-3zM1209 709h3v3h-3zM1233 709h3v3h-3zM1257 709h3v3h-3zM1281 709h3v3h-3zM9 733h3v3h-3zM33 733h3v3h-3zM57 733h3v3h-3zM81 733h3v3h-3zM105 733h3v3h-3zM129 733h3v3h-3zM153 733h3v3h-3zM177 733h3v3h-3zM201 733h3v3h-3zM225 733h3v3h-3zM249 733h3v3h-3zM273 733h3v3h-3zM297 733h3v3h-3zM321 733h3v3h-3zM345 733h3v3h-3zM369 733h3v3h-3zM393 733h3v3h-3zM417 733h3v3h-3zM441 733h3v3h-3zM465 733h3v3h-3zM489 733h3v3h-3zM513 733h3v3h-3zM537 733h3v3h-3zM561 733h3v3h-3zM585 733h3v3h-3zM609 733h3v3h-3zM633 733h3v3h-3zM657 733h3v3h-3zM681 733h3v3h-3zM705 733h3v3h-3zM729 733h3v3h-3zM753 733h3v3h-3zM777 733h3v3h-3zM801 733h3v3h-3zM825 733h3v3h-3zM849 733h3v3h-3zM873 733h3v3h-3zM897 733h3v3h-3zM921 733h3v3h-3zM945 733h3v3h-3zM969 733h3v3h-3zM993 733h3v3h-3zM1017 733h3v3h-3zM1041 733h3v3h-3zM1065 733h3v3h-3zM1089 733h3v3h-3zM1113 733h3v3h-3zM1137 733h3v3h-3zM1161 733h3v3h-3zM1185 733h3v3h-3zM1209 733h3v3h-3zM1233 733h3v3h-3zM1257 733h3v3h-3zM1281 733h3v3h-3zM9 757h3v3h-3zM33 757h3v3h-3zM57 757h3v3h-3zM81 757h3v3h-3zM105 757h3v3h-3zM129 757h3v3h-3zM153 757h3v3h-3zM177 757h3v3h-3zM201 757h3v3h-3zM225 757h3v3h-3zM249 757h3v3h-3zM273 757h3v3h-3zM297 757h3v3h-3zM321 757h3v3h-3zM345 757h3v3h-3zM369 757h3v3h-3zM393 757h3v3h-3zM417 757h3v3h-3zM441 757h3v3h-3zM465 757h3v3h-3zM489 757h3v3h-3zM513 757h3v3h-3zM537 757h3v3h-3zM561 757h3v3h-3zM585 757h3v3h-3zM609 757h3v3h-3zM633 757h3v3h-3zM657 757h3v3h-3zM681 757h3v3h-3zM705 757h3v3h-3zM729 757h3v3h-3zM753 757h3v3h-3zM777 757h3v3h-3zM801 757h3v3h-3zM825 757h3v3h-3zM849 757h3v3h-3zM873 757h3v3h-3zM897 757h3v3h-3zM921 757h3v3h-3zM945 757h3v3h-3zM969 757h3v3h-3zM993 757h3v3h-3zM1017 757h3v3h-3zM1041 757h3v3h-3zM1065 757h3v3h-3zM1089 757h3v3h-3zM1113 757h3v3h-3zM1137 757h3v3h-3zM1161 757h3v3h-3zM1185 757h3v3h-3zM1209 757h3v3h-3zM1233 757h3v3h-3zM1257 757h3v3h-3zM1281 757h3v3h-3zM9 781h3v3h-3zM33 781h3v3h-3zM57 781h3v3h-3zM81 781h3v3h-3zM105 781h3v3h-3zM129 781h3v3h-3zM153 781h3v3h-3zM177 781h3v3h-3zM201 781h3v3h-3zM225 781h3v3h-3zM249 781h3v3h-3zM273 781h3v3h-3zM297 781h3v3h-3zM321 781h3v3h-3zM345 781h3v3h-3zM369 781h3v3h-3zM393 781h3v3h-3zM417 781h3v3h-3zM441 781h3v3h-3zM465 781h3v3h-3zM489 781h3v3h-3zM513 781h3v3h-3zM537 781h3v3h-3zM561 781h3v3h-3zM585 781h3v3h-3zM609 781h3v3h-3zM633 781h3v3h-3zM657 781h3v3h-3zM681 781h3v3h-3zM705 781h3v3h-3zM729 781h3v3h-3zM753 781h3v3h-3zM777 781h3v3h-3zM801 781h3v3h-3zM825 781h3v3h-3zM849 781h3v3h-3zM873 781h3v3h-3zM897 781h3v3h-3zM921 781h3v3h-3zM945 781h3v3h-3zM969 781h3v3h-3zM993 781h3v3h-3zM1017 781h3v3h-3zM1041 781h3v3h-3zM1065 781h3v3h-3zM1089 781h3v3h-3zM1113 781h3v3h-3zM1137 781h3v3h-3zM1161 781h3v3h-3zM1185 781h3v3h-3zM1209 781h3v3h-3zM1233 781h3v3h-3zM1257 781h3v3h-3zM1281 781h3v3h-3zM9 805h3v3h-3zM33 805h3v3h-3zM57 805h3v3h-3zM81 805h3v3h-3zM105 805h3v3h-3zM129 805h3v3h-3zM153 805h3v3h-3zM177 805h3v3h-3zM201 805h3v3h-3zM225 805h3v3h-3zM249 805h3v3h-3zM273 805h3v3h-3zM297 805h3v3h-3zM321 805h3v3h-3zM345 805h3v3h-3zM369 805h3v3h-3zM393 805h3v3h-3zM417 805h3v3h-3zM441 805h3v3h-3zM465 805h3v3h-3zM489 805h3v3h-3zM513 805h3v3h-3zM537 805h3v3h-3zM561 805h3v3h-3zM585 805h3v3h-3zM609 805h3v3h-3zM633 805h3v3h-3zM657 805h3v3h-3zM681 805h3v3h-3zM705 805h3v3h-3zM729 805h3v3h-3zM753 805h3v3h-3zM777 805h3v3h-3zM801 805h3v3h-3zM825 805h3v3h-3zM849 805h3v3h-3zM873 805h3v3h-3zM897 805h3v3h-3zM921 805h3v3h-3zM945 805h3v3h-3zM969 805h3v3h-3zM993 805h3v3h-3zM1017 805h3v3h-3zM1041 805h3v3h-3zM1065 805h3v3h-3zM1089 805h3v3h-3zM1113 805h3v3h-3zM1137 805h3v3h-3zM1161 805h3v3h-3zM1185 805h3v3h-3zM1209 805h3v3h-3zM1233 805h3v3h-3zM1257 805h3v3h-3zM1281 805h3v3h-3z" fill="#f9f9f9"/><path d="M10 14h1v1h-1zM34 14h1v1h-1zM58 14h1v1h-1zM82 14h1v1h-1zM106 14h1v1h-1zM130 14h1v1h-1zM154 14h1v1h-1zM178 14h1v1h-1zM202 14h1v1h-1zM226 14h1v1h-1zM250 14h1v1h-1zM274 14h1v1h-1zM298 14h1v1h-1zM322 14h1v1h-1zM346 14h1v1h-1zM370 14h1v1h-1zM394 14h1v1h-1zM418 14h1v1h-1zM442 14h1v1h-1zM466 14h1v1h-1zM490 14h1v1h-1zM514 14h1v1h-1zM538 14h1v1h-1zM562 14h1v1h-1zM586 14h1v1h-1zM610 14h1v1h-1zM634 14h1v1h-1zM658 14h1v1h-1zM682 14h1v1h-1zM706 14h1v1h-1zM730 14h1v1h-1zM754 14h1v1h-1zM778 14h1v1h-1zM802 14h1v1h-1zM826 14h1v1h-1zM850 14h1v1h-1zM874 14h1v1h-1zM898 14h1v1h-1zM922 14h1v1h-1zM946 14h1v1h-1zM970 14h1v1h-1zM994 14h1v1h-1zM1018 14h1v1h-1zM1042 14h1v1h-1zM1066 14h1v1h-1zM1090 14h1v1h-1zM1114 14h1v1h-1zM1138 14h1v1h-1zM1162 14h1v1h-1zM1186 14h1v1h-1zM1210 14h1v1h-1zM1234 14h1v1h-1zM1258 14h1v1h-1zM1282 14h1v1h-1zM10 38h1v1h-1zM34 38h1v1h-1zM58 38h1v1h-1zM82 38h1v1h-1zM106 38h1v1h-1zM130 38h1v1h-1zM154 38h1v1h-1zM178 38h1v1h-1zM202 38h1v1h-1zM226 38h1v1h-1zM250 38h1v1h-1zM274 38h1v1h-1zM298 38h1v1h-1zM322 38h1v1h-1zM346 38h1v1h-1zM370 38h1v1h-1zM394 38h1v1h-1zM418 38h1v1h-1zM442 38h1v1h-1zM466 38h1v1h-1zM490 38h1v1h-1zM514 38h1v1h-1zM538 38h1v1h-1zM562 38h1v1h-1zM586 38h1v1h-1zM610 38h1v1h-1zM634 38h1v1h-1zM658 38h1v1h-1zM682 38h1v1h-1zM706 38h1v1h-1zM730 38h1v1h-1zM754 38h1v1h-1zM778 38h1v1h-1zM802 38h1v1h-1zM826 38h1v1h-1zM850 38h1v1h-1zM874 38h1v1h-1zM898 38h1v1h-1zM922 38h1v1h-1zM946 38h1v1h-1zM970 38h1v1h-1zM994 38h1v1h-1zM1018 38h1v1h-1zM1042 38h1v1h-1zM1066 38h1v1h-1zM1090 38h1v1h-1zM1114 38h1v1h-1zM1138 38h1v1h-1zM1162 38h1v1h-1zM1186 38h1v1h-1zM1210 38h1v1h-1zM1234 38h1v1h-1zM1258 38h1v1h-1zM1282 38h1v1h-1zM10 62h1v1h-1zM34 62h1v1h-1zM58 62h1v1h-1zM82 62h1v1h-1zM106 62h1v1h-1zM130 62h1v1h-1zM154 62h1v1h-1zM178 62h1v1h-1zM202 62h1v1h-1zM226 62h1v1h-1zM250 62h1v1h-1zM274 62h1v1h-1zM298 62h1v1h-1zM322 62h1v1h-1zM346 62h1v1h-1zM370 62h1v1h-1zM394 62h1v1h-1zM418 62h1v1h-1zM442 62h1v1h-1zM466 62h1v1h-1zM490 62h1v1h-1zM514 62h1v1h-1zM538 62h1v1h-1zM562 62h1v1h-1zM586 62h1v1h-1zM610 62h1v1h-1zM634 62h1v1h-1zM658 62h1v1h-1zM682 62h1v1h-1zM706 62h1v1h-1zM730 62h1v1h-1zM754 62h1v1h-1zM778 62h1v1h-1zM802 62h1v1h-1zM826 62h1v1h-1zM850 62h1v1h-1zM874 62h1v1h-1zM898 62h1v1h-1zM922 62h1v1h-1zM946 62h1v1h-1zM970 62h1v1h-1zM994 62h1v1h-1zM1018 62h1v1h-1zM1042 62h1v1h-1zM1066 62h1v1h-1zM1090 62h1v1h-1zM1114 62h1v1h-1zM1138 62h1v1h-1zM1162 62h1v1h-1zM1186 62h1v1h-1zM1210 62h1v1h-1zM1234 62h1v1h-1zM1258 62h1v1h-1zM1282 62h1v1h-1zM10 86h1v1h-1zM34 86h1v1h-1zM58 86h1v1h-1zM82 86h1v1h-1zM106 86h1v1h-1zM130 86h1v1h-1zM154 86h1v1h-1zM178 86h1v1h-1zM202 86h1v1h-1zM226 86h1v1h-1zM250 86h1v1h-1zM274 86h1v1h-1zM298 86h1v1h-1zM322 86h1v1h-1zM346 86h1v1h-1zM370 86h1v1h-1zM394 86h1v1h-1zM418 86h1v1h-1zM442 86h1v1h-1zM466 86h1v1h-1zM490 86h1v1h-1zM514 86h1v1h-1zM538 86h1v1h-1zM562 86h1v1h-1zM586 86h1v1h-1zM610 86h1v1h-1zM634 86h1v1h-1zM658 86h1v1h-1zM682 86h1v1h-1zM706 86h1v1h-1zM730 86h1v1h-1zM754 86h1v1h-1zM778 86h1v1h-1zM802 86h1v1h-1zM826 86h1v1h-1zM850 86h1v1h-1zM874 86h1v1h-1zM898 86h1v1h-1zM922 86h1v1h-1zM946 86h1v1h-1zM970 86h1v1h-1zM994 86h1v1h-1zM1018 86h1v1h-1zM1042 86h1v1h-1zM1066 86h1v1h-1zM1090 86h1v1h-1zM1114 86h1v1h-1zM1138 86h1v1h-1zM1162 86h1v1h-1zM1186 86h1v1h-1zM1210 86h1v1h-1zM1234 86h1v1h-1zM1258 86h1v1h-1zM1282 86h1v1h-1zM10 110h1v1h-1zM34 110h1v1h-1zM58 110h1v1h-1zM82 110h1v1h-1zM106 110h1v1h-1zM130 110h1v1h-1zM154 110h1v1h-1zM178 110h1v1h-1zM202 110h1v1h-1zM226 110h1v1h-1zM250 110h1v1h-1zM274 110h1v1h-1zM298 110h1v1h-1zM322 110h1v1h-1zM346 110h1v1h-1zM370 110h1v1h-1zM394 110h1v1h-1zM418 110h1v1h-1zM442 110h1v1h-1zM466 110h1v1h-1zM490 110h1v1h-1zM514 110h1v1h-1zM538 110h1v1h-1zM562 110h1v1h-1zM586 110h1v1h-1zM610 110h1v1h-1zM634 110h1v1h-1zM658 110h1v1h-1zM682 110h1v1h-1zM706 110h1v1h-1zM730 110h1v1h-1zM754 110h1v1h-1zM778 110h1v1h-1zM802 110h1v1h-1zM826 110h1v1h-1zM850 110h1v1h-1zM874 110h1v1h-1zM898 110h1v1h-1zM922 110h1v1h-1zM946 110h1v1h-1zM970 110h1v1h-1zM994 110h1v1h-1zM1018 110h1v1h-1zM1042 110h1v1h-1zM1066 110h1v1h-1zM1090 110h1v1h-1zM1114 110h1v1h-1zM1138 110h1v1h-1zM1162 110h1v1h-1zM1186 110h1v1h-1zM1210 110h1v1h-1zM1234 110h1v1h-1zM1258 110h1v1h-1zM1282 110h1v1h-1zM10 134h1v1h-1zM34 134h1v1h-1zM58 134h1v1h-1zM82 134h1v1h-1zM106 134h1v1h-1zM130 134h1v1h-1zM154 134h1v1h-1zM178 134h1v1h-1zM202 134h1v1h-1zM226 134h1v1h-1zM250 134h1v1h-1zM274 134h1v1h-1zM298 134h1v1h-1zM322 134h1v1h-1zM346 134h1v1h-1zM370 134h1v1h-1zM394 134h1v1h-1zM418 134h1v1h-1zM442 134h1v1h-1zM466 134h1v1h-1zM490 134h1v1h-1zM514 134h1v1h-1zM538 134h1v1h-1zM562 134h1v1h-1zM586 134h1v1h-1zM610 134h1v1h-1zM634 134h1v1h-1zM658 134h1v1h-1zM682 134h1v1h-1zM706 134h1v1h-1zM730 134h1v1h-1zM754 134h1v1h-1zM778 134h1v1h-1zM802 134h1v1h-1zM826 134h1v1h-1zM850 134h1v1h-1zM874 134h1v1h-1zM898 134h1v1h-1zM922 134h1v1h-1zM946 134h1v1h-1zM970 134h1v1h-1zM994 134h1v1h-1zM1018 134h1v1h-1zM1042 134h1v1h-1zM1066 134h1v1h-1zM1090 134h1v1h-1zM1114 134h1v1h-1zM1138 134h1v1h-1zM1162 134h1v1h-1zM1186 134h1v1h-1zM1210 134h1v1h-1zM1234 134h1v1h-1zM1258 134h1v1h-1zM1282 134h1v1h-1zM10 158h1v1h-1zM34 158h1v1h-1zM58 158h1v1h-1zM82 158h1v1h-1zM106 158h1v1h-1zM130 158h1v1h-1zM154 158h1v1h-1zM178 158h1v1h-1zM202 158h1v1h-1zM226 158h1v1h-1zM250 158h1v1h-1zM274 158h1v1h-1zM298 158h1v1h-1zM322 158h1v1h-1zM346 158h1v1h-1zM370 158h1v1h-1zM394 158h1v1h-1zM418 158h1v1h-1zM442 158h1v1h-1zM466 158h1v1h-1zM490 158h1v1h-1zM514 158h1v1h-1zM538 158h1v1h-1zM562 158h1v1h-1zM586 158h1v1h-1zM610 158h1v1h-1zM634 158h1v1h-1zM658 158h1v1h-1zM682 158h1v1h-1zM706 158h1v1h-1zM730 158h1v1h-1zM754 158h1v1h-1zM778 158h1v1h-1zM802 158h1v1h-1zM826 158h1v1h-1zM850 158h1v1h-1zM874 158h1v1h-1zM898 158h1v1h-1zM922 158h1v1h-1zM946 158h1v1h-1zM970 158h1v1h-1zM994 158h1v1h-1zM1018 158h1v1h-1zM1042 158h1v1h-1zM1066 158h1v1h-1zM1090 158h1v1h-1zM1114 158h1v1h-1zM1138 158h1v1h-1zM1162 158h1v1h-1zM1186 158h1v1h-1zM1210 158h1v1h-1zM1234 158h1v1h-1zM1258 158h1v1h-1zM1282 158h1v1h-1zM10 182h1v1h-1zM34 182h1v1h-1zM58 182h1v1h-1zM82 182h1v1h-1zM106 182h1v1h-1zM130 182h1v1h-1zM154 182h1v1h-1zM178 182h1v1h-1zM202 182h1v1h-1zM226 182h1v1h-1zM250 182h1v1h-1zM274 182h1v1h-1zM298 182h1v1h-1zM322 182h1v1h-1zM346 182h1v1h-1zM370 182h1v1h-1zM394 182h1v1h-1zM418 182h1v1h-1zM442 182h1v1h-1zM466 182h1v1h-1zM490 182h1v1h-1zM514 182h1v1h-1zM538 182h1v1h-1zM562 182h1v1h-1zM586 182h1v1h-1zM610 182h1v1h-1zM634 182h1v1h-1zM658 182h1v1h-1zM682 182h1v1h-1zM706 182h1v1h-1zM730 182h1v1h-1zM754 182h1v1h-1zM778 182h1v1h-1zM802 182h1v1h-1zM826 182h1v1h-1zM850 182h1v1h-1zM874 182h1v1h-1zM898 182h1v1h-1zM922 182h1v1h-1zM946 182h1v1h-1zM970 182h1v1h-1zM994 182h1v1h-1zM1018 182h1v1h-1zM1042 182h1v1h-1zM1066 182h1v1h-1zM1090 182h1v1h-1zM1114 182h1v1h-1zM1138 182h1v1h-1zM1162 182h1v1h-1zM1186 182h1v1h-1zM1210 182h1v1h-1zM1234 182h1v1h-1zM1258 182h1v1h-1zM1282 182h1v1h-1zM10 206h1v1h-1zM34 206h1v1h-1zM58 206h1v1h-1zM82 206h1v1h-1zM106 206h1v1h-1zM130 206h1v1h-1zM154 206h1v1h-1zM178 206h1v1h-1zM202 206h1v1h-1zM226 206h1v1h-1zM250 206h1v1h-1zM274 206h1v1h-1zM298 206h1v1h-1zM322 206h1v1h-1zM346 206h1v1h-1zM370 206h1v1h-1zM394 206h1v1h-1zM418 206h1v1h-1zM442 206h1v1h-1zM466 206h1v1h-1zM490 206h1v1h-1zM514 206h1v1h-1zM538 206h1v1h-1zM562 206h1v1h-1zM586 206h1v1h-1zM610 206h1v1h-1zM634 206h1v1h-1zM658 206h1v1h-1zM682 206h1v1h-1zM706 206h1v1h-1zM730 206h1v1h-1zM754 206h1v1h-1zM778 206h1v1h-1zM802 206h1v1h-1zM826 206h1v1h-1zM850 206h1v1h-1zM874 206h1v1h-1zM898 206h1v1h-1zM922 206h1v1h-1zM946 206h1v1h-1zM970 206h1v1h-1zM994 206h1v1h-1zM1018 206h1v1h-1zM1042 206h1v1h-1zM1066 206h1v1h-1zM1090 206h1v1h-1zM1114 206h1v1h-1zM1138 206h1v1h-1zM1162 206h1v1h-1zM1186 206h1v1h-1zM1210 206h1v1h-1zM1234 206h1v1h-1zM1258 206h1v1h-1zM1282 206h1v1h-1zM10 230h1v1h-1zM34 230h1v1h-1zM58 230h1v1h-1zM82 230h1v1h-1zM106 230h1v1h-1zM130 230h1v1h-1zM154 230h1v1h-1zM178 230h1v1h-1zM202 230h1v1h-1zM226 230h1v1h-1zM250 230h1v1h-1zM274 230h1v1h-1zM298 230h1v1h-1zM322 230h1v1h-1zM346 230h1v1h-1zM370 230h1v1h-1zM394 230h1v1h-1zM418 230h1v1h-1zM442 230h1v1h-1zM466 230h1v1h-1zM490 230h1v1h-1zM514 230h1v1h-1zM538 230h1v1h-1zM562 230h1v1h-1zM586 230h1v1h-1zM610 230h1v1h-1zM634 230h1v1h-1zM658 230h1v1h-1zM682 230h1v1h-1zM706 230h1v1h-1zM730 230h1v1h-1zM754 230h1v1h-1zM778 230h1v1h-1zM802 230h1v1h-1zM826 230h1v1h-1zM850 230h1v1h-1zM874 230h1v1h-1zM898 230h1v1h-1zM922 230h1v1h-1zM946 230h1v1h-1zM970 230h1v1h-1zM994 230h1v1h-1zM1018 230h1v1h-1zM1042 230h1v1h-1zM1066 230h1v1h-1zM1090 230h1v1h-1zM1114 230h1v1h-1zM1138 230h1v1h-1zM1162 230h1v1h-1zM1186 230h1v1h-1zM1210 230h1v1h-1zM1234 230h1v1h-1zM1258 230h1v1h-1zM1282 230h1v1h-1zM10 254h1v1h-1zM34 254h1v1h-1zM58 254h1v1h-1zM82 254h1v1h-1zM106 254h1v1h-1zM130 254h1v1h-1zM154 254h1v1h-1zM178 254h1v1h-1zM202 254h1v1h-1zM226 254h1v1h-1zM250 254h1v1h-1zM274 254h1v1h-1zM298 254h1v1h-1zM322 254h1v1h-1zM346 254h1v1h-1zM370 254h1v1h-1zM394 254h1v1h-1zM418 254h1v1h-1zM442 254h1v1h-1zM466 254h1v1h-1zM490 254h1v1h-1zM514 254h1v1h-1zM538 254h1v1h-1zM562 254h1v1h-1zM586 254h1v1h-1zM610 254h1v1h-1zM634 254h1v1h-1zM658 254h1v1h-1zM682 254h1v1h-1zM706 254h1v1h-1zM730 254h1v1h-1zM754 254h1v1h-1zM778 254h1v1h-1zM802 254h1v1h-1zM826 254h1v1h-1zM850 254h1v1h-1zM874 254h1v1h-1zM898 254h1v1h-1zM922 254h1v1h-1zM946 254h1v1h-1zM970 254h1v1h-1zM994 254h1v1h-1zM1018 254h1v1h-1zM1042 254h1v1h-1zM1066 254h1v1h-1zM1090 254h1v1h-1zM1114 254h1v1h-1zM1138 254h1v1h-1zM1162 254h1v1h-1zM1186 254h1v1h-1zM1210 254h1v1h-1zM1234 254h1v1h-1zM1258 254h1v1h-1zM1282 254h1v1h-1zM10 278h1v1h-1zM34 278h1v1h-1zM58 278h1v1h-1zM82 278h1v1h-1zM106 278h1v1h-1zM130 278h1v1h-1zM154 278h1v1h-1zM178 278h1v1h-1zM202 278h1v1h-1zM226 278h1v1h-1zM250 278h1v1h-1zM274 278h1v1h-1zM298 278h1v1h-1zM322 278h1v1h-1zM346 278h1v1h-1zM370 278h1v1h-1zM394 278h1v1h-1zM418 278h1v1h-1zM442 278h1v1h-1zM466 278h1v1h-1zM490 278h1v1h-1zM514 278h1v1h-1zM538 278h1v1h-1zM562 278h1v1h-1zM586 278h1v1h-1zM610 278h1v1h-1zM634 278h1v1h-1zM658 278h1v1h-1zM682 278h1v1h-1zM706 278h1v1h-1zM730 278h1v1h-1zM754 278h1v1h-1zM778 278h1v1h-1zM802 278h1v1h-1zM826 278h1v1h-1zM850 278h1v1h-1zM874 278h1v1h-1zM898 278h1v1h-1zM922 278h1v1h-1zM946 278h1v1h-1zM970 278h1v1h-1zM994 278h1v1h-1zM1018 278h1v1h-1zM1042 278h1v1h-1zM1066 278h1v1h-1zM1090 278h1v1h-1zM1114 278h1v1h-1zM1138 278h1v1h-1zM1162 278h1v1h-1zM1186 278h1v1h-1zM1210 278h1v1h-1zM1234 278h1v1h-1zM1258 278h1v1h-1zM1282 278h1v1h-1zM10 302h1v1h-1zM34 302h1v1h-1zM58 302h1v1h-1zM82 302h1v1h-1zM106 302h1v1h-1zM130 302h1v1h-1zM154 302h1v1h-1zM178 302h1v1h-1zM202 302h1v1h-1zM226 302h1v1h-1zM250 302h1v1h-1zM274 302h1v1h-1zM298 302h1v1h-1zM322 302h1v1h-1zM346 302h1v1h-1zM370 302h1v1h-1zM394 302h1v1h-1zM418 302h1v1h-1zM442 302h1v1h-1zM466 302h1v1h-1zM490 302h1v1h-1zM514 302h1v1h-1zM538 302h1v1h-1zM562 302h1v1h-1zM586 302h1v1h-1zM610 302h1v1h-1zM634 302h1v1h-1zM658 302h1v1h-1zM682 302h1v1h-1zM706 302h1v1h-1zM730 302h1v1h-1zM754 302h1v1h-1zM778 302h1v1h-1zM802 302h1v1h-1zM826 302h1v1h-1zM850 302h1v1h-1zM874 302h1v1h-1zM898 302h1v1h-1zM922 302h1v1h-1zM946 302h1v1h-1zM970 302h1v1h-1zM994 302h1v1h-1zM1018 302h1v1h-1zM1042 302h1v1h-1zM1066 302h1v1h-1zM1090 302h1v1h-1zM1114 302h1v1h-1zM1138 302h1v1h-1zM1162 302h1v1h-1zM1186 302h1v1h-1zM1210 302h1v1h-1zM1234 302h1v1h-1zM1258 302h1v1h-1zM1282 302h1v1h-1zM10 326h1v1h-1zM34 326h1v1h-1zM58 326h1v1h-1zM82 326h1v1h-1zM106 326h1v1h-1zM130 326h1v1h-1zM154 326h1v1h-1zM178 326h1v1h-1zM202 326h1v1h-1zM226 326h1v1h-1zM250 326h1v1h-1zM274 326h1v1h-1zM298 326h1v1h-1zM322 326h1v1h-1zM346 326h1v1h-1zM370 326h1v1h-1zM394 326h1v1h-1zM418 326h1v1h-1zM442 326h1v1h-1zM466 326h1v1h-1zM490 326h1v1h-1zM514 326h1v1h-1zM538 326h1v1h-1zM562 326h1v1h-1zM586 326h1v1h-1zM610 326h1v1h-1zM634 326h1v1h-1zM658 326h1v1h-1zM682 326h1v1h-1zM706 326h1v1h-1zM730 326h1v1h-1zM754 326h1v1h-1zM778 326h1v1h-1zM802 326h1v1h-1zM826 326h1v1h-1zM850 326h1v1h-1zM874 326h1v1h-1zM898 326h1v1h-1zM922 326h1v1h-1zM946 326h1v1h-1zM970 326h1v1h-1zM994 326h1v1h-1zM1018 326h1v1h-1zM1042 326h1v1h-1zM1066 326h1v1h-1zM1090 326h1v1h-1zM1114 326h1v1h-1zM1138 326h1v1h-1zM1162 326h1v1h-1zM1186 326h1v1h-1zM1210 326h1v1h-1zM1234 326h1v1h-1zM1258 326h1v1h-1zM1282 326h1v1h-1zM10 350h1v1h-1zM34 350h1v1h-1zM58 350h1v1h-1zM82 350h1v1h-1zM106 350h1v1h-1zM130 350h1v1h-1zM154 350h1v1h-1zM178 350h1v1h-1zM202 350h1v1h-1zM226 350h1v1h-1zM250 350h1v1h-1zM274 350h1v1h-1zM298 350h1v1h-1zM322 350h1v1h-1zM346 350h1v1h-1zM370 350h1v1h-1zM394 350h1v1h-1zM418 350h1v1h-1zM442 350h1v1h-1zM466 350h1v1h-1zM490 350h1v1h-1zM514 350h1v1h-1zM538 350h1v1h-1zM562 350h1v1h-1zM586 350h1v1h-1zM610 350h1v1h-1zM634 350h1v1h-1zM658 350h1v1h-1zM682 350h1v1h-1zM706 350h1v1h-1zM730 350h1v1h-1zM754 350h1v1h-1zM778 350h1v1h-1zM802 350h1v1h-1zM826 350h1v1h-1zM850 350h1v1h-1zM874 350h1v1h-1zM898 350h1v1h-1zM922 350h1v1h-1zM946 350h1v1h-1zM970 350h1v1h-1zM994 350h1v1h-1zM1018 350h1v1h-1zM1042 350h1v1h-1zM1066 350h1v1h-1zM1090 350h1v1h-1zM1114 350h1v1h-1zM1138 350h1v1h-1zM1162 350h1v1h-1zM1186 350h1v1h-1zM1210 350h1v1h-1zM1234 350h1v1h-1zM1258 350h1v1h-1zM1282 350h1v1h-1zM10 374h1v1h-1zM34 374h1v1h-1zM58 374h1v1h-1zM82 374h1v1h-1zM106 374h1v1h-1zM130 374h1v1h-1zM154 374h1v1h-1zM178 374h1v1h-1zM202 374h1v1h-1zM226 374h1v1h-1zM250 374h1v1h-1zM274 374h1v1h-1zM298 374h1v1h-1zM322 374h1v1h-1zM346 374h1v1h-1zM370 374h1v1h-1zM394 374h1v1h-1zM418 374h1v1h-1zM442 374h1v1h-1zM466 374h1v1h-1zM490 374h1v1h-1zM514 374h1v1h-1zM538 374h1v1h-1zM562 374h1v1h-1zM586 374h1v1h-1zM610 374h1v1h-1zM634 374h1v1h-1zM658 374h1v1h-1zM682 374h1v1h-1zM706 374h1v1h-1zM730 374h1v1h-1zM754 374h1v1h-1zM778 374h1v1h-1zM802 374h1v1h-1zM826 374h1v1h-1zM850 374h1v1h-1zM874 374h1v1h-1zM898 374h1v1h-1zM922 374h1v1h-1zM946 374h1v1h-1zM970 374h1v1h-1zM994 374h1v1h-1zM1018 374h1v1h-1zM1042 374h1v1h-1zM1066 374h1v1h-1zM1090 374h1v1h-1zM1114 374h1v1h-1zM1138 374h1v1h-1zM1162 374h1v1h-1zM1186 374h1v1h-1zM1210 374h1v1h-1zM1234 374h1v1h-1zM1258 374h1v1h-1zM1282 374h1v1h-1zM10 398h1v1h-1zM34 398h1v1h-1zM58 398h1v1h-1zM82 398h1v1h-1zM106 398h1v1h-1zM130 398h1v1h-1zM154 398h1v1h-1zM178 398h1v1h-1zM202 398h1v1h-1zM226 398h1v1h-1zM250 398h1v1h-1zM274 398h1v1h-1zM298 398h1v1h-1zM322 398h1v1h-1zM346 398h1v1h-1zM370 398h1v1h-1zM394 398h1v1h-1zM418 398h1v1h-1zM442 398h1v1h-1zM466 398h1v1h-1zM490 398h1v1h-1zM514 398h1v1h-1zM538 398h1v1h-1zM562 398h1v1h-1zM586 398h1v1h-1zM610 398h1v1h-1zM634 398h1v1h-1zM658 398h1v1h-1zM682 398h1v1h-1zM706 398h1v1h-1zM730 398h1v1h-1zM754 398h1v1h-1zM778 398h1v1h-1zM802 398h1v1h-1zM826 398h1v1h-1zM850 398h1v1h-1zM874 398h1v1h-1zM898 398h1v1h-1zM922 398h1v1h-1zM946 398h1v1h-1zM970 398h1v1h-1zM994 398h1v1h-1zM1018 398h1v1h-1zM1042 398h1v1h-1zM1066 398h1v1h-1zM1090 398h1v1h-1zM1114 398h1v1h-1zM1138 398h1v1h-1zM1162 398h1v1h-1zM1186 398h1v1h-1zM1210 398h1v1h-1zM1234 398h1v1h-1zM1258 398h1v1h-1zM1282 398h1v1h-1zM10 422h1v1h-1zM34 422h1v1h-1zM58 422h1v1h-1zM82 422h1v1h-1zM106 422h1v1h-1zM130 422h1v1h-1zM154 422h1v1h-1zM178 422h1v1h-1zM202 422h1v1h-1zM226 422h1v1h-1zM250 422h1v1h-1zM274 422h1v1h-1zM298 422h1v1h-1zM322 422h1v1h-1zM346 422h1v1h-1zM370 422h1v1h-1zM394 422h1v1h-1zM418 422h1v1h-1zM442 422h1v1h-1zM466 422h1v1h-1zM490 422h1v1h-1zM514 422h1v1h-1zM538 422h1v1h-1zM562 422h1v1h-1zM586 422h1v1h-1zM610 422h1v1h-1zM634 422h1v1h-1zM658 422h1v1h-1zM682 422h1v1h-1zM706 422h1v1h-1zM730 422h1v1h-1zM754 422h1v1h-1zM778 422h1v1h-1zM802 422h1v1h-1zM826 422h1v1h-1zM850 422h1v1h-1zM874 422h1v1h-1zM898 422h1v1h-1zM922 422h1v1h-1zM946 422h1v1h-1zM970 422h1v1h-1zM994 422h1v1h-1zM1018 422h1v1h-1zM1042 422h1v1h-1zM1066 422h1v1h-1zM1090 422h1v1h-1zM1114 422h1v1h-1zM1138 422h1v1h-1zM1162 422h1v1h-1zM1186 422h1v1h-1zM1210 422h1v1h-1zM1234 422h1v1h-1zM1258 422h1v1h-1zM1282 422h1v1h-1zM10 446h1v1h-1zM34 446h1v1h-1zM58 446h1v1h-1zM82 446h1v1h-1zM106 446h1v1h-1zM130 446h1v1h-1zM154 446h1v1h-1zM178 446h1v1h-1zM202 446h1v1h-1zM226 446h1v1h-1zM250 446h1v1h-1zM274 446h1v1h-1zM298 446h1v1h-1zM322 446h1v1h-1zM346 446h1v1h-1zM370 446h1v1h-1zM394 446h1v1h-1zM418 446h1v1h-1zM442 446h1v1h-1zM466 446h1v1h-1zM490 446h1v1h-1zM514 446h1v1h-1zM538 446h1v1h-1zM562 446h1v1h-1zM586 446h1v1h-1zM610 446h1v1h-1zM634 446h1v1h-1zM658 446h1v1h-1zM682 446h1v1h-1zM706 446h1v1h-1zM730 446h1v1h-1zM754 446h1v1h-1zM778 446h1v1h-1zM802 446h1v1h-1zM826 446h1v1h-1zM850 446h1v1h-1zM874 446h1v1h-1zM898 446h1v1h-1zM922 446h1v1h-1zM946 446h1v1h-1zM970 446h1v1h-1zM994 446h1v1h-1zM1018 446h1v1h-1zM1042 446h1v1h-1zM1066 446h1v1h-1zM1090 446h1v1h-1zM1114 446h1v1h-1zM1138 446h1v1h-1zM1162 446h1v1h-1zM1186 446h1v1h-1zM1210 446h1v1h-1zM1234 446h1v1h-1zM1258 446h1v1h-1zM1282 446h1v1h-1zM10 470h1v1h-1zM34 470h1v1h-1zM58 470h1v1h-1zM82 470h1v1h-1zM106 470h1v1h-1zM130 470h1v1h-1zM154 470h1v1h-1zM178 470h1v1h-1zM202 470h1v1h-1zM226 470h1v1h-1zM250 470h1v1h-1zM274 470h1v1h-1zM298 470h1v1h-1zM322 470h1v1h-1zM346 470h1v1h-1zM370 470h1v1h-1zM394 470h1v1h-1zM418 470h1v1h-1zM442 470h1v1h-1zM466 470h1v1h-1zM490 470h1v1h-1zM514 470h1v1h-1zM538 470h1v1h-1zM562 470h1v1h-1zM586 470h1v1h-1zM610 470h1v1h-1zM634 470h1v1h-1zM658 470h1v1h-1zM682 470h1v1h-1zM706 470h1v1h-1zM730 470h1v1h-1zM754 470h1v1h-1zM778 470h1v1h-1zM802 470h1v1h-1zM826 470h1v1h-1zM850 470h1v1h-1zM874 470h1v1h-1zM898 470h1v1h-1zM922 470h1v1h-1zM946 470h1v1h-1zM970 470h1v1h-1zM994 470h1v1h-1zM1018 470h1v1h-1zM1042 470h1v1h-1zM1066 470h1v1h-1zM1090 470h1v1h-1zM1114 470h1v1h-1zM1138 470h1v1h-1zM1162 470h1v1h-1zM1186 470h1v1h-1zM1210 470h1v1h-1zM1234 470h1v1h-1zM1258 470h1v1h-1zM1282 470h1v1h-1zM10 494h1v1h-1zM34 494h1v1h-1zM58 494h1v1h-1zM82 494h1v1h-1zM106 494h1v1h-1zM130 494h1v1h-1zM154 494h1v1h-1zM178 494h1v1h-1zM202 494h1v1h-1zM226 494h1v1h-1zM250 494h1v1h-1zM274 494h1v1h-1zM298 494h1v1h-1zM322 494h1v1h-1zM346 494h1v1h-1zM370 494h1v1h-1zM394 494h1v1h-1zM418 494h1v1h-1zM442 494h1v1h-1zM466 494h1v1h-1zM490 494h1v1h-1zM514 494h1v1h-1zM538 494h1v1h-1zM562 494h1v1h-1zM586 494h1v1h-1zM610 494h1v1h-1zM634 494h1v1h-1zM658 494h1v1h-1zM682 494h1v1h-1zM706 494h1v1h-1zM730 494h1v1h-1zM754 494h1v1h-1zM778 494h1v1h-1zM802 494h1v1h-1zM826 494h1v1h-1zM850 494h1v1h-1zM874 494h1v1h-1zM898 494h1v1h-1zM922 494h1v1h-1zM946 494h1v1h-1zM970 494h1v1h-1zM994 494h1v1h-1zM1018 494h1v1h-1zM1042 494h1v1h-1zM1066 494h1v1h-1zM1090 494h1v1h-1zM1114 494h1v1h-1zM1138 494h1v1h-1zM1162 494h1v1h-1zM1186 494h1v1h-1zM1210 494h1v1h-1zM1234 494h1v1h-1zM1258 494h1v1h-1zM1282 494h1v1h-1zM10 518h1v1h-1zM34 518h1v1h-1zM58 518h1v1h-1zM82 518h1v1h-1zM106 518h1v1h-1zM130 518h1v1h-1zM154 518h1v1h-1zM178 518h1v1h-1zM202 518h1v1h-1zM226 518h1v1h-1zM250 518h1v1h-1zM274 518h1v1h-1zM298 518h1v1h-1zM322 518h1v1h-1zM346 518h1v1h-1zM370 518h1v1h-1zM394 518h1v1h-1zM418 518h1v1h-1zM442 518h1v1h-1zM466 518h1v1h-1zM490 518h1v1h-1zM514 518h1v1h-1zM538 518h1v1h-1zM562 518h1v1h-1zM586 518h1v1h-1zM610 518h1v1h-1zM634 518h1v1h-1zM658 518h1v1h-1zM682 518h1v1h-1zM706 518h1v1h-1zM730 518h1v1h-1zM754 518h1v1h-1zM778 518h1v1h-1zM802 518h1v1h-1zM826 518h1v1h-1zM850 518h1v1h-1zM874 518h1v1h-1zM898 518h1v1h-1zM922 518h1v1h-1zM946 518h1v1h-1zM970 518h1v1h-1zM994 518h1v1h-1zM1018 518h1v1h-1zM1042 518h1v1h-1zM1066 518h1v1h-1zM1090 518h1v1h-1zM1114 518h1v1h-1zM1138 518h1v1h-1zM1162 518h1v1h-1zM1186 518h1v1h-1zM1210 518h1v1h-1zM1234 518h1v1h-1zM1258 518h1v1h-1zM1282 518h1v1h-1zM10 542h1v1h-1zM34 542h1v1h-1zM58 542h1v1h-1zM82 542h1v1h-1zM106 542h1v1h-1zM130 542h1v1h-1zM154 542h1v1h-1zM178 542h1v1h-1zM202 542h1v1h-1zM226 542h1v1h-1zM250 542h1v1h-1zM274 542h1v1h-1zM298 542h1v1h-1zM322 542h1v1h-1zM346 542h1v1h-1zM370 542h1v1h-1zM394 542h1v1h-1zM418 542h1v1h-1zM442 542h1v1h-1zM466 542h1v1h-1zM490 542h1v1h-1zM514 542h1v1h-1zM538 542h1v1h-1zM562 542h1v1h-1zM586 542h1v1h-1zM610 542h1v1h-1zM634 542h1v1h-1zM658 542h1v1h-1zM682 542h1v1h-1zM706 542h1v1h-1zM730 542h1v1h-1zM754 542h1v1h-1zM778 542h1v1h-1zM802 542h1v1h-1zM826 542h1v1h-1zM850 542h1v1h-1zM874 542h1v1h-1zM898 542h1v1h-1zM922 542h1v1h-1zM946 542h1v1h-1zM970 542h1v1h-1zM994 542h1v1h-1zM1018 542h1v1h-1zM1042 542h1v1h-1zM1066 542h1v1h-1zM1090 542h1v1h-1zM1114 542h1v1h-1zM1138 542h1v1h-1zM1162 542h1v1h-1zM1186 542h1v1h-1zM1210 542h1v1h-1zM1234 542h1v1h-1zM1258 542h1v1h-1zM1282 542h1v1h-1zM10 566h1v1h-1zM34 566h1v1h-1zM58 566h1v1h-1zM82 566h1v1h-1zM106 566h1v1h-1zM130 566h1v1h-1zM154 566h1v1h-1zM178 566h1v1h-1zM202 566h1v1h-1zM226 566h1v1h-1zM250 566h1v1h-1zM274 566h1v1h-1zM298 566h1v1h-1zM322 566h1v1h-1zM346 566h1v1h-1zM370 566h1v1h-1zM394 566h1v1h-1zM418 566h1v1h-1zM442 566h1v1h-1zM466 566h1v1h-1zM490 566h1v1h-1zM514 566h1v1h-1zM538 566h1v1h-1zM562 566h1v1h-1zM586 566h1v1h-1zM610 566h1v1h-1zM634 566h1v1h-1zM658 566h1v1h-1zM682 566h1v1h-1zM706 566h1v1h-1zM730 566h1v1h-1zM754 566h1v1h-1zM778 566h1v1h-1zM802 566h1v1h-1zM826 566h1v1h-1zM850 566h1v1h-1zM874 566h1v1h-1zM898 566h1v1h-1zM922 566h1v1h-1zM946 566h1v1h-1zM970 566h1v1h-1zM994 566h1v1h-1zM1018 566h1v1h-1zM1042 566h1v1h-1zM1066 566h1v1h-1zM1090 566h1v1h-1zM1114 566h1v1h-1zM1138 566h1v1h-1zM1162 566h1v1h-1zM1186 566h1v1h-1zM1210 566h1v1h-1zM1234 566h1v1h-1zM1258 566h1v1h-1zM1282 566h1v1h-1zM10 590h1v1h-1zM34 590h1v1h-1zM58 590h1v1h-1zM82 590h1v1h-1zM106 590h1v1h-1zM130 590h1v1h-1zM154 590h1v1h-1zM178 590h1v1h-1zM202 590h1v1h-1zM226 590h1v1h-1zM250 590h1v1h-1zM274 590h1v1h-1zM298 590h1v1h-1zM322 590h1v1h-1zM346 590h1v1h-1zM370 590h1v1h-1zM394 590h1v1h-1zM418 590h1v1h-1zM442 590h1v1h-1zM466 590h1v1h-1zM490 590h1v1h-1zM514 590h1v1h-1zM538 590h1v1h-1zM562 590h1v1h-1zM586 590h1v1h-1zM610 590h1v1h-1zM634 590h1v1h-1zM658 590h1v1h-1zM682 590h1v1h-1zM706 590h1v1h-1zM730 590h1v1h-1zM754 590h1v1h-1zM778 590h1v1h-1zM802 590h1v1h-1zM826 590h1v1h-1zM850 590h1v1h-1zM874 590h1v1h-1zM898 590h1v1h-1zM922 590h1v1h-1zM946 590h1v1h-1zM970 590h1v1h-1zM994 590h1v1h-1zM1018 590h1v1h-1zM1042 590h1v1h-1zM1066 590h1v1h-1zM1090 590h1v1h-1zM1114 590h1v1h-1zM1138 590h1v1h-1zM1162 590h1v1h-1zM1186 590h1v1h-1zM1210 590h1v1h-1zM1234 590h1v1h-1zM1258 590h1v1h-1zM1282 590h1v1h-1zM10 614h1v1h-1zM34 614h1v1h-1zM58 614h1v1h-1zM82 614h1v1h-1zM106 614h1v1h-1zM130 614h1v1h-1zM154 614h1v1h-1zM178 614h1v1h-1zM202 614h1v1h-1zM226 614h1v1h-1zM250 614h1v1h-1zM274 614h1v1h-1zM298 614h1v1h-1zM322 614h1v1h-1zM346 614h1v1h-1zM370 614h1v1h-1zM394 614h1v1h-1zM418 614h1v1h-1zM442 614h1v1h-1zM466 614h1v1h-1zM490 614h1v1h-1zM514 614h1v1h-1zM538 614h1v1h-1zM562 614h1v1h-1zM586 614h1v1h-1zM610 614h1v1h-1zM634 614h1v1h-1zM658 614h1v1h-1zM682 614h1v1h-1zM706 614h1v1h-1zM730 614h1v1h-1zM754 614h1v1h-1zM778 614h1v1h-1zM802 614h1v1h-1zM826 614h1v1h-1zM850 614h1v1h-1zM874 614h1v1h-1zM898 614h1v1h-1zM922 614h1v1h-1zM946 614h1v1h-1zM970 614h1v1h-1zM994 614h1v1h-1zM1018 614h1v1h-1zM1042 614h1v1h-1zM1066 614h1v1h-1zM1090 614h1v1h-1zM1114 614h1v1h-1zM1138 614h1v1h-1zM1162 614h1v1h-1zM1186 614h1v1h-1zM1210 614h1v1h-1zM1234 614h1v1h-1zM1258 614h1v1h-1zM1282 614h1v1h-1zM10 638h1v1h-1zM34 638h1v1h-1zM58 638h1v1h-1zM82 638h1v1h-1zM106 638h1v1h-1zM130 638h1v1h-1zM154 638h1v1h-1zM178 638h1v1h-1zM202 638h1v1h-1zM226 638h1v1h-1zM250 638h1v1h-1zM274 638h1v1h-1zM298 638h1v1h-1zM322 638h1v1h-1zM346 638h1v1h-1zM370 638h1v1h-1zM394 638h1v1h-1zM418 638h1v1h-1zM442 638h1v1h-1zM466 638h1v1h-1zM490 638h1v1h-1zM514 638h1v1h-1zM538 638h1v1h-1zM562 638h1v1h-1zM586 638h1v1h-1zM610 638h1v1h-1zM634 638h1v1h-1zM658 638h1v1h-1zM682 638h1v1h-1zM706 638h1v1h-1zM730 638h1v1h-1zM754 638h1v1h-1zM778 638h1v1h-1zM802 638h1v1h-1zM826 638h1v1h-1zM850 638h1v1h-1zM874 638h1v1h-1zM898 638h1v1h-1zM922 638h1v1h-1zM946 638h1v1h-1zM970 638h1v1h-1zM994 638h1v1h-1zM1018 638h1v1h-1zM1042 638h1v1h-1zM1066 638h1v1h-1zM1090 638h1v1h-1zM1114 638h1v1h-1zM1138 638h1v1h-1zM1162 638h1v1h-1zM1186 638h1v1h-1zM1210 638h1v1h-1zM1234 638h1v1h-1zM1258 638h1v1h-1zM1282 638h1v1h-1zM10 662h1v1h-1zM34 662h1v1h-1zM58 662h1v1h-1zM82 662h1v1h-1zM106 662h1v1h-1zM130 662h1v1h-1zM154 662h1v1h-1zM178 662h1v1h-1zM202 662h1v1h-1zM226 662h1v1h-1zM250 662h1v1h-1zM274 662h1v1h-1zM298 662h1v1h-1zM322 662h1v1h-1zM346 662h1v1h-1zM370 662h1v1h-1zM394 662h1v1h-1zM418 662h1v1h-1zM442 662h1v1h-1zM466 662h1v1h-1zM490 662h1v1h-1zM514 662h1v1h-1zM538 662h1v1h-1zM562 662h1v1h-1zM586 662h1v1h-1zM610 662h1v1h-1zM634 662h1v1h-1zM658 662h1v1h-1zM682 662h1v1h-1zM706 662h1v1h-1zM730 662h1v1h-1zM754 662h1v1h-1zM778 662h1v1h-1zM802 662h1v1h-1zM826 662h1v1h-1zM850 662h1v1h-1zM874 662h1v1h-1zM898 662h1v1h-1zM922 662h1v1h-1zM946 662h1v1h-1zM970 662h1v1h-1zM994 662h1v1h-1zM1018 662h1v1h-1zM1042 662h1v1h-1zM1066 662h1v1h-1zM1090 662h1v1h-1zM1114 662h1v1h-1zM1138 662h1v1h-1zM1162 662h1v1h-1zM1186 662h1v1h-1zM1210 662h1v1h-1zM1234 662h1v1h-1zM1258 662h1v1h-1zM1282 662h1v1h-1zM10 686h1v1h-1zM34 686h1v1h-1zM58 686h1v1h-1zM82 686h1v1h-1zM106 686h1v1h-1zM130 686h1v1h-1zM154 686h1v1h-1zM178 686h1v1h-1zM202 686h1v1h-1zM226 686h1v1h-1zM250 686h1v1h-1zM274 686h1v1h-1zM298 686h1v1h-1zM322 686h1v1h-1zM346 686h1v1h-1zM370 686h1v1h-1zM394 686h1v1h-1zM418 686h1v1h-1zM442 686h1v1h-1zM466 686h1v1h-1zM490 686h1v1h-1zM514 686h1v1h-1zM538 686h1v1h-1zM562 686h1v1h-1zM586 686h1v1h-1zM610 686h1v1h-1zM634 686h1v1h-1zM658 686h1v1h-1zM682 686h1v1h-1zM706 686h1v1h-1zM730 686h1v1h-1zM754 686h1v1h-1zM778 686h1v1h-1zM802 686h1v1h-1zM826 686h1v1h-1zM850 686h1v1h-1zM874 686h1v1h-1zM898 686h1v1h-1zM922 686h1v1h-1zM946 686h1v1h-1zM970 686h1v1h-1zM994 686h1v1h-1zM1018 686h1v1h-1zM1042 686h1v1h-1zM1066 686h1v1h-1zM1090 686h1v1h-1zM1114 686h1v1h-1zM1138 686h1v1h-1zM1162 686h1v1h-1zM1186 686h1v1h-1zM1210 686h1v1h-1zM1234 686h1v1h-1zM1258 686h1v1h-1zM1282 686h1v1h-1zM10 710h1v1h-1zM34 710h1v1h-1zM58 710h1v1h-1zM82 710h1v1h-1zM106 710h1v1h-1zM130 710h1v1h-1zM154 710h1v1h-1zM178 710h1v1h-1zM202 710h1v1h-1zM226 710h1v1h-1zM250 710h1v1h-1zM274 710h1v1h-1zM298 710h1v1h-1zM322 710h1v1h-1zM346 710h1v1h-1zM370 710h1v1h-1zM394 710h1v1h-1zM418 710h1v1h-1zM442 710h1v1h-1zM466 710h1v1h-1zM490 710h1v1h-1zM514 710h1v1h-1zM538 710h1v1h-1zM562 710h1v1h-1zM586 710h1v1h-1zM610 710h1v1h-1zM634 710h1v1h-1zM658 710h1v1h-1zM682 710h1v1h-1zM706 710h1v1h-1zM730 710h1v1h-1zM754 710h1v1h-1zM778 710h1v1h-1zM802 710h1v1h-1zM826 710h1v1h-1zM850 710h1v1h-1zM874 710h1v1h-1zM898 710h1v1h-1zM922 710h1v1h-1zM946 710h1v1h-1zM970 710h1v1h-1zM994 710h1v1h-1zM1018 710h1v1h-1zM1042 710h1v1h-1zM1066 710h1v1h-1zM1090 710h1v1h-1zM1114 710h1v1h-1zM1138 710h1v1h-1zM1162 710h1v1h-1zM1186 710h1v1h-1zM1210 710h1v1h-1zM1234 710h1v1h-1zM1258 710h1v1h-1zM1282 710h1v1h-1zM10 734h1v1h-1zM34 734h1v1h-1zM58 734h1v1h-1zM82 734h1v1h-1zM106 734h1v1h-1zM130 734h1v1h-1zM154 734h1v1h-1zM178 734h1v1h-1zM202 734h1v1h-1zM226 734h1v1h-1zM250 734h1v1h-1zM274 734h1v1h-1zM298 734h1v1h-1zM322 734h1v1h-1zM346 734h1v1h-1zM370 734h1v1h-1zM394 734h1v1h-1zM418 734h1v1h-1zM442 734h1v1h-1zM466 734h1v1h-1zM490 734h1v1h-1zM514 734h1v1h-1zM538 734h1v1h-1zM562 734h1v1h-1zM586 734h1v1h-1zM610 734h1v1h-1zM634 734h1v1h-1zM658 734h1v1h-1zM682 734h1v1h-1zM706 734h1v1h-1zM730 734h1v1h-1zM754 734h1v1h-1zM778 734h1v1h-1zM802 734h1v1h-1zM826 734h1v1h-1zM850 734h1v1h-1zM874 734h1v1h-1zM898 734h1v1h-1zM922 734h1v1h-1zM946 734h1v1h-1zM970 734h1v1h-1zM994 734h1v1h-1zM1018 734h1v1h-1zM1042 734h1v1h-1zM1066 734h1v1h-1zM1090 734h1v1h-1zM1114 734h1v1h-1zM1138 734h1v1h-1zM1162 734h1v1h-1zM1186 734h1v1h-1zM1210 734h1v1h-1zM1234 734h1v1h-1zM1258 734h1v1h-1zM1282 734h1v1h-1zM10 758h1v1h-1zM34 758h1v1h-1zM58 758h1v1h-1zM82 758h1v1h-1zM106 758h1v1h-1zM130 758h1v1h-1zM154 758h1v1h-1zM178 758h1v1h-1zM202 758h1v1h-1zM226 758h1v1h-1zM250 758h1v1h-1zM274 758h1v1h-1zM298 758h1v1h-1zM322 758h1v1h-1zM346 758h1v1h-1zM370 758h1v1h-1zM394 758h1v1h-1zM418 758h1v1h-1zM442 758h1v1h-1zM466 758h1v1h-1zM490 758h1v1h-1zM514 758h1v1h-1zM538 758h1v1h-1zM562 758h1v1h-1zM586 758h1v1h-1zM610 758h1v1h-1zM634 758h1v1h-1zM658 758h1v1h-1zM682 758h1v1h-1zM706 758h1v1h-1zM730 758h1v1h-1zM754 758h1v1h-1zM778 758h1v1h-1zM802 758h1v1h-1zM826 758h1v1h-1zM850 758h1v1h-1zM874 758h1v1h-1zM898 758h1v1h-1zM922 758h1v1h-1zM946 758h1v1h-1zM970 758h1v1h-1zM994 758h1v1h-1zM1018 758h1v1h-1zM1042 758h1v1h-1zM1066 758h1v1h-1zM1090 758h1v1h-1zM1114 758h1v1h-1zM1138 758h1v1h-1zM1162 758h1v1h-1zM1186 758h1v1h-1zM1210 758h1v1h-1zM1234 758h1v1h-1zM1258 758h1v1h-1zM1282 758h1v1h-1zM10 782h1v1h-1zM34 782h1v1h-1zM58 782h1v1h-1zM82 782h1v1h-1zM106 782h1v1h-1zM130 782h1v1h-1zM154 782h1v1h-1zM178 782h1v1h-1zM202 782h1v1h-1zM226 782h1v1h-1zM250 782h1v1h-1zM274 782h1v1h-1zM298 782h1v1h-1zM322 782h1v1h-1zM346 782h1v1h-1zM370 782h1v1h-1zM394 782h1v1h-1zM418 782h1v1h-1zM442 782h1v1h-1zM466 782h1v1h-1zM490 782h1v1h-1zM514 782h1v1h-1zM538 782h1v1h-1zM562 782h1v1h-1zM586 782h1v1h-1zM610 782h1v1h-1zM634 782h1v1h-1zM658 782h1v1h-1zM682 782h1v1h-1zM706 782h1v1h-1zM730 782h1v1h-1zM754 782h1v1h-1zM778 782h1v1h-1zM802 782h1v1h-1zM826 782h1v1h-1zM850 782h1v1h-1zM874 782h1v1h-1zM898 782h1v1h-1zM922 782h1v1h-1zM946 782h1v1h-1zM970 782h1v1h-1zM994 782h1v1h-1zM1018 782h1v1h-1zM1042 782h1v1h-1zM1066 782h1v1h-1zM1090 782h1v1h-1zM1114 782h1v1h-1zM1138 782h1v1h-1zM1162 782h1v1h-1zM1186 782h1v1h-1zM1210 782h1v1h-1zM1234 782h1v1h-1zM1258 782h1v1h-1zM1282 782h1v1h-1zM10 806h1v1h-1zM34 806h1v1h-1zM58 806h1v1h-1zM82 806h1v1h-1zM106 806h1v1h-1zM130 806h1v1h-1zM154 806h1v1h-1zM178 806h1v1h-1zM202 806h1v1h-1zM226 806h1v1h-1zM250 806h1v1h-1zM274 806h1v1h-1zM298 806h1v1h-1zM322 806h1v1h-1zM346 806h1v1h-1zM370 806h1v1h-1zM394 806h1v1h-1zM418 806h1v1h-1zM442 806h1v1h-1zM466 806h1v1h-1zM490 806h1v1h-1zM514 806h1v1h-1zM538 806h1v1h-1zM562 806h1v1h-1zM586 806h1v1h-1zM610 806h1v1h-1zM634 806h1v1h-1zM658 806h1v1h-1zM682 806h1v1h-1zM706 806h1v1h-1zM730 806h1v1h-1zM754 806h1v1h-1zM778 806h1v1h-1zM802 806h1v1h-1zM826 806h1v1h-1zM850 806h1v1h-1zM874 806h1v1h-1zM898 806h1v1h-1zM922 806h1v1h-1zM946 806h1v1h-1zM970 806h1v1h-1zM994 806h1v1h-1zM1018 806h1v1h-1zM1042 806h1v1h-1zM1066 806h1v1h-1zM1090 806h1v1h-1zM1114 806h1v1h-1zM1138 806h1v1h-1zM1162 806h1v1h-1zM1186 806h1v1h-1zM1210 806h1v1h-1zM1234 806h1v1h-1zM1258 806h1v1h-1zM1282 806h1v1h-1z" fill="#8c8c8c"/><polyline points="186,86.5 286.5,86.5 286.5,122.5 404,122.5" fill="none" stroke="#569ce4" stroke-width="1" shape-rendering="crispEdges"/><polyline points="214.5,86.5 214.5,222" fill="none" stroke="#569ce4" stroke-width="1" shape-rendering="crispEdges"/><polyline points="186,158.5 530.5,158.5" fill="none" stroke="#5e5e5e" stroke-width="1" shape-rendering="crispEdges"/><polyline points="404,98.5 334.5,98.5 334.5,170.5 238.5,170.5 238.5,206" fill="none" stroke="#5e5e5e" stroke-width="1" shape-rendering="crispEdges"/><polyline points="238.5,206 238.5,222" fill="none" stroke="#569ce4" stroke-width="1" shape-rendering="crispEdges"/><polyline points="370.5,98.5 370.5,74.5 766.5,74.5 766.5,146.5" fill="none" stroke="#5e5e5e" stroke-width="1" shape-rendering="crispEdges"/><polyline points="66.5,194.5 674.5,194.5" fill="none" stroke="#569ce4" stroke-width="1" shape-rendering="crispEdges"/><polyline points="646.5,194.5 646.5,698.5" fill="none" stroke="#569ce4" stroke-width="1" shape-rendering="crispEdges"/><polyline points="439.5,110.5 478.5,110.5 478.5,134.5 514.5,134.5" fill="none" stroke="#569ce4" stroke-width="1" shape-rendering="crispEdges"/><polyline points="514.5,134.5 530.5,134.5" fill="none" stroke="#5e5e5e" stroke-width="1" shape-rendering="crispEdges"/><polyline points="594.5,146.5 674.5,146.5" fill="none" stroke="#5e5e5e" stroke-width="1" shape-rendering="crispEdges"/><polyline points="562.5,175 562.5,218.5 502.5,218.5 502.5,722.5 562.5,722.5 562.5,680" fill="none" stroke="#5e5e5e" stroke-width="1" shape-rendering="crispEdges"/><polyline points="738.5,146.5 814.5,146.5 814.5,350.5 890.5,350.5" fill="none" stroke="#5e5e5e" stroke-width="1" shape-rendering="crispEdges"/><polyline points="738.5,194.5 754.5,194.5" fill="none" stroke="#569ce4" stroke-width="1" shape-rendering="crispEdges"/><polyline points="226.5,263 226.5,390" fill="none" stroke="#569ce4" stroke-width="1" shape-rendering="crispEdges"/><polyline points="226.5,290.5 404,290.5" fill="none" stroke="#569ce4" stroke-width="1" shape-rendering="crispEdges"/><polyline points="186,326.5 530.5,326.5" fill="none" stroke="#5e5e5e" stroke-width="1" shape-rendering="crispEdges"/><polyline points="404,266.5 334.5,266.5 334.5,338.5 250.5,338.5 250.5,375" fill="none" stroke="#569ce4" stroke-width="1" shape-rendering="crispEdges"/><polyline points="250.5,375 250.5,390" fill="none" stroke="#5e5e5e" stroke-width="1" shape-rendering="crispEdges"/><polyline points="370.5,266.5 370.5,242.5 766.5,242.5 766.5,314.5" fill="none" stroke="#569ce4" stroke-width="1" shape-rendering="crispEdges"/><polyline points="439.5,278.5 478.5,278.5 478.5,302.5 514.5,302.5" fill="none" stroke="#5e5e5e" stroke-width="1" shape-rendering="crispEdges"/><polyline points="514.5,302.5 530.5,302.5" fill="none" stroke="#569ce4" stroke-width="1" shape-rendering="crispEdges"/><polyline points="594.5,314.5 674.5,314.5" fill="none" stroke="#569ce4" stroke-width="1" shape-rendering="crispEdges"/><polyline points="562.5,343 562.5,386.5 502.5,386.5" fill="none" stroke="#5e5e5e" stroke-width="1" shape-rendering="crispEdges"/><polyline points="738.5,314.5 802.5,314.5 802.5,374.5 890.5,374.5" fill="none" stroke="#569ce4" stroke-width="1" shape-rendering="crispEdges"/><polyline points="738.5,362.5 754.5,362.5" fill="none" stroke="#5e5e5e" stroke-width="1" shape-rendering="crispEdges"/><polyline points="646.5,362.5 674.5,362.5" fill="none" stroke="#569ce4" stroke-width="1" shape-rendering="crispEdges"/><polyline points="238.5,431 238.5,558" fill="none" stroke="#5e5e5e" stroke-width="1" shape-rendering="crispEdges"/><polyline points="238.5,458.5 404,458.5" fill="none" stroke="#5e5e5e" stroke-width="1" shape-rendering="crispEdges"/><polyline points="186,494.5 530.5,494.5" fill="none" stroke="#5e5e5e" stroke-width="1" shape-rendering="crispEdges"/><polyline points="404,434.5 334.5,434.5 334.5,506.5 262.5,506.5 262.5,558" fill="none" stroke="#569ce4" stroke-width="1" shape-rendering="crispEdges"/><polyline points="370.5,434.5 370.5,410.5 766.5,410.5 766.5,482.5" fill="none" stroke="#569ce4" stroke-width="1" shape-rendering="crispEdges"/><polyline points="439.5,446.5 478.5,446.5 478.5,470.5 530.5,470.5" fill="none" stroke="#569ce4" stroke-width="1" shape-rendering="crispEdges"/><polyline points="594.5,482.5 674.5,482.5" fill="none" stroke="#569ce4" stroke-width="1" shape-rendering="crispEdges"/><polyline points="562.5,511 562.5,554.5 502.5,554.5" fill="none" stroke="#5e5e5e" stroke-width="1" shape-rendering="crispEdges"/><polyline points="738.5,482.5 802.5,482.5 802.5,398.5 890.5,398.5" fill="none" stroke="#569ce4" stroke-width="1" shape-rendering="crispEdges"/><polyline points="738.5,530.5 754.5,530.5" fill="none" stroke="#5e5e5e" stroke-width="1" shape-rendering="crispEdges"/><polyline points="646.5,530.5 674.5,530.5" fill="none" stroke="#569ce4" stroke-width="1" shape-rendering="crispEdges"/><polyline points="250.5,599 250.5,758.5 298.5,758.5" fill="none" stroke="#5e5e5e" stroke-width="1" shape-rendering="crispEdges"/><polyline points="250.5,626.5 404,626.5" fill="none" stroke="#5e5e5e" stroke-width="1" shape-rendering="crispEdges"/><polyline points="186,662.5 530.5,662.5" fill="none" stroke="#5e5e5e" stroke-width="1" shape-rendering="crispEdges"/><polyline points="404,602.5 286.5,602.5 286.5,734.5 298.5,734.5" fill="none" stroke="#5e5e5e" stroke-width="1" shape-rendering="crispEdges"/><polyline points="370.5,602.5 370.5,578.5 766.5,578.5 766.5,650.5" fill="none" stroke="#5e5e5e" stroke-width="1" shape-rendering="crispEdges"/><polyline points="439.5,614.5 478.5,614.5 478.5,638.5 530.5,638.5" fill="none" stroke="#5e5e5e" stroke-width="1" shape-rendering="crispEdges"/><polyline points="594.5,650.5 674.5,650.5" fill="none" stroke="#5e5e5e" stroke-width="1" shape-rendering="crispEdges"/><polyline points="738.5,650.5 814.5,650.5 814.5,422.5 890.5,422.5" fill="none" stroke="#5e5e5e" stroke-width="1" shape-rendering="crispEdges"/><polyline points="738.5,698.5 754.5,698.5" fill="none" stroke="#569ce4" stroke-width="1" shape-rendering="crispEdges"/><polyline points="646.5,698.5 674.5,698.5" fill="none" stroke="#569ce4" stroke-width="1" shape-rendering="crispEdges"/><polyline points="186,698.5 502.5,698.5" fill="none" stroke="#5e5e5e" stroke-width="1" shape-rendering="crispEdges"/><polyline points="298.5,734.5 314.5,734.5" fill="none" stroke="#5e5e5e" stroke-width="1" shape-rendering="crispEdges"/><polyline points="298.5,758.5 314.5,758.5" fill="none" stroke="#5e5e5e" stroke-width="1" shape-rendering="crispEdges"/><polyline points="355,746.5 820,746.5" fill="none" stroke="#5e5e5e" stroke-width="1" shape-rendering="crispEdges"/><polyline points="954.5,350.5 1022.5,350.5" fill="none" stroke="#569ce4" stroke-width="1" shape-rendering="crispEdges"/><polyline points="954.5,374.5 1022.5,374.5" fill="none" stroke="#5e5e5e" stroke-width="1" shape-rendering="crispEdges"/><polyline points="954.5,398.5 1022.5,398.5" fill="none" stroke="#569ce4" stroke-width="1" shape-rendering="crispEdges"/><polyline points="954.5,422.5 1022.5,422.5" fill="none" stroke="#569ce4" stroke-width="1" shape-rendering="crispEdges"/><polyline points="954.5,446.5 1007,446.5" fill="none" stroke="#569ce4" stroke-width="1" shape-rendering="crispEdges"/><polyline points="1007,446.5 1022.5,446.5" fill="none" stroke="#5e5e5e" stroke-width="1" shape-rendering="crispEdges"/><polyline points="954.5,470.5 994.5,470.5 994.5,482.5 1054.5,482.5 1054.5,454.5" fill="none" stroke="#569ce4" stroke-width="1" shape-rendering="crispEdges"/><polyline points="954.5,494.5 1078.5,494.5 1078.5,454.5" fill="none" stroke="#569ce4" stroke-width="1" shape-rendering="crispEdges"/><polyline points="1102.5,454.5 1102.5,470.5" fill="none" stroke="#5e5e5e" stroke-width="1" shape-rendering="crispEdges"/><path d="M398.5,90.5 L407.5,90.5 Q427.5,90.5 439.5,110.5 Q427.5,130.5 407.5,130.5 L398.5,130.5 Q418.5,110.5 398.5,90.5 Z" fill="none" stroke="#000" stroke-width="2.0" stroke-linejoin="round"/><path d="M391.0,91.0 Q413.0,110.5 391.0,130.0" fill="none" stroke="#000" stroke-width="1.6"/><polyline points="530.75,103.25 594.5,134.0" fill="none" stroke="#111" stroke-width="1.6"/><polyline points="594.5,158.75 530.75,190.25" fill="none" stroke="#111" stroke-width="1.6"/><line x1="530.75" y1="102.75" x2="530.75" y2="190.75" stroke="#2a2a2a" stroke-width="1.3"/><line x1="594.5" y1="133.5" x2="594.5" y2="159.25" stroke="#2a2a2a" stroke-width="1.3"/><text x="534.5" y="138.1" font-size="10.5" fill="#1414ff" textLength="14.5" lengthAdjust="spacingAndGlyphs" stroke="#1414ff" stroke-width="0.1">w0</text><text x="534.5" y="162.1" font-size="10.5" fill="#1414ff" textLength="14.5" lengthAdjust="spacingAndGlyphs" stroke="#1414ff" stroke-width="0.1">w1</text><text x="587.6" y="149.7" font-size="10.5" fill="#1414ff" stroke="#1414ff" stroke-width="0.1">f</text><text x="556.5" y="169.3" font-size="10.5" fill="#1414ff" textLength="12" lengthAdjust="spacingAndGlyphs" stroke="#1414ff" stroke-width="0.1">S0</text><text x="537.5" y="95.75" font-size="10.1" fill="#969696" textLength="49.5" lengthAdjust="spacingAndGlyphs" stroke="#fff" stroke-width="0.12" paint-order="fill">MUX_B_0</text><text x="402.2" y="83.9" font-size="10.1" fill="#969696" textLength="32.8" lengthAdjust="spacingAndGlyphs" stroke="#fff" stroke-width="0.12" paint-order="fill">XOR_4</text><rect x="674.5" y="138.5" width="64" height="64" fill="none" stroke="#444" stroke-width="1.05"/><line x1="706.5" y1="122.5" x2="706.5" y2="138.7" stroke="#1414ff" stroke-width="1.2"/><line x1="706.5" y1="202.3" x2="706.5" y2="218.5" stroke="#1414ff" stroke-width="1.2"/><polyline points="675.2,190.25 682.5,194.75 675.2,199.25" fill="none" stroke="#0000ff" stroke-width="1.5"/><text x="677.6" y="150.1" font-size="10.5" fill="#1414ff" stroke="#1414ff" stroke-width="0.1">D</text><text x="702.8" y="150.1" font-size="10.5" fill="#1414ff" stroke="#1414ff" stroke-width="0.1">S</text><text x="726.5" y="150.1" font-size="10.5" fill="#1414ff" stroke="#1414ff" stroke-width="0.1">Q</text><text x="702.6" y="198.1" font-size="10.5" fill="#1414ff" stroke="#1414ff" stroke-width="0.1">R</text><text x="726.5" y="198.1" font-size="10.5" fill="#1414ff" stroke="#1414ff" stroke-width="0.1">Q</text><line x1="727.5" y1="189.1" x2="734.5" y2="189.1" stroke="#1414ff" stroke-width="0.9"/><text x="726.4" y="132.2" font-size="10.1" fill="#969696" textLength="36.7" lengthAdjust="spacingAndGlyphs" stroke="#fff" stroke-width="0.12" paint-order="fill">D_FF_8</text><path d="M398.5,258.5 L407.5,258.5 Q427.5,258.5 439.5,278.5 Q427.5,298.5 407.5,298.5 L398.5,298.5 Q418.5,278.5 398.5,258.5 Z" fill="none" stroke="#000" stroke-width="2.0" stroke-linejoin="round"/><path d="M391.0,259.0 Q413.0,278.5 391.0,298.0" fill="none" stroke="#000" stroke-width="1.6"/><polyline points="530.75,271.25 594.5,302.0" fill="none" stroke="#111" stroke-width="1.6"/><polyline points="594.5,326.75 530.75,358.25" fill="none" stroke="#111" stroke-width="1.6"/><line x1="530.75" y1="270.75" x2="530.75" y2="358.75" stroke="#2a2a2a" stroke-width="1.3"/><line x1="594.5" y1="301.5" x2="594.5" y2="327.25" stroke="#2a2a2a" stroke-width="1.3"/><text x="534.5" y="306.1" font-size="10.5" fill="#1414ff" textLength="14.5" lengthAdjust="spacingAndGlyphs" stroke="#1414ff" stroke-width="0.1">w0</text><text x="534.5" y="330.1" font-size="10.5" fill="#1414ff" textLength="14.5" lengthAdjust="spacingAndGlyphs" stroke="#1414ff" stroke-width="0.1">w1</text><text x="587.6" y="317.7" font-size="10.5" fill="#1414ff" stroke="#1414ff" stroke-width="0.1">f</text><text x="556.5" y="337.3" font-size="10.5" fill="#1414ff" textLength="12" lengthAdjust="spacingAndGlyphs" stroke="#1414ff" stroke-width="0.1">S0</text><text x="537.5" y="263.75" font-size="10.1" fill="#969696" textLength="49.5" lengthAdjust="spacingAndGlyphs" stroke="#fff" stroke-width="0.12" paint-order="fill">MUX_B_1</text><text x="402.2" y="251.9" font-size="10.1" fill="#969696" textLength="32.8" lengthAdjust="spacingAndGlyphs" stroke="#fff" stroke-width="0.12" paint-order="fill">XOR_5</text><rect x="674.5" y="306.5" width="64" height="64" fill="none" stroke="#444" stroke-width="1.05"/><line x1="706.5" y1="290.5" x2="706.5" y2="306.7" stroke="#1414ff" stroke-width="1.2"/><line x1="706.5" y1="370.3" x2="706.5" y2="386.5" stroke="#1414ff" stroke-width="1.2"/><polyline points="675.2,358.25 682.5,362.75 675.2,367.25" fill="none" stroke="#0000ff" stroke-width="1.5"/><text x="677.6" y="318.1" font-size="10.5" fill="#1414ff" stroke="#1414ff" stroke-width="0.1">D</text><text x="702.8" y="318.1" font-size="10.5" fill="#1414ff" stroke="#1414ff" stroke-width="0.1">S</text><text x="726.5" y="318.1" font-size="10.5" fill="#1414ff" stroke="#1414ff" stroke-width="0.1">Q</text><text x="702.6" y="366.1" font-size="10.5" fill="#1414ff" stroke="#1414ff" stroke-width="0.1">R</text><text x="726.5" y="366.1" font-size="10.5" fill="#1414ff" stroke="#1414ff" stroke-width="0.1">Q</text><line x1="727.5" y1="357.1" x2="734.5" y2="357.1" stroke="#1414ff" stroke-width="0.9"/><text x="726.4" y="300.2" font-size="10.1" fill="#969696" textLength="36.7" lengthAdjust="spacingAndGlyphs" stroke="#fff" stroke-width="0.12" paint-order="fill">D_FF_9</text><path d="M398.5,426.5 L407.5,426.5 Q427.5,426.5 439.5,446.5 Q427.5,466.5 407.5,466.5 L398.5,466.5 Q418.5,446.5 398.5,426.5 Z" fill="none" stroke="#000" stroke-width="2.0" stroke-linejoin="round"/><path d="M391.0,427.0 Q413.0,446.5 391.0,466.0" fill="none" stroke="#000" stroke-width="1.6"/><polyline points="530.75,439.25 594.5,470.0" fill="none" stroke="#111" stroke-width="1.6"/><polyline points="594.5,494.75 530.75,526.25" fill="none" stroke="#111" stroke-width="1.6"/><line x1="530.75" y1="438.75" x2="530.75" y2="526.75" stroke="#2a2a2a" stroke-width="1.3"/><line x1="594.5" y1="469.5" x2="594.5" y2="495.25" stroke="#2a2a2a" stroke-width="1.3"/><text x="534.5" y="474.1" font-size="10.5" fill="#1414ff" textLength="14.5" lengthAdjust="spacingAndGlyphs" stroke="#1414ff" stroke-width="0.1">w0</text><text x="534.5" y="498.1" font-size="10.5" fill="#1414ff" textLength="14.5" lengthAdjust="spacingAndGlyphs" stroke="#1414ff" stroke-width="0.1">w1</text><text x="587.6" y="485.7" font-size="10.5" fill="#1414ff" stroke="#1414ff" stroke-width="0.1">f</text><text x="556.5" y="505.3" font-size="10.5" fill="#1414ff" textLength="12" lengthAdjust="spacingAndGlyphs" stroke="#1414ff" stroke-width="0.1">S0</text><text x="537.5" y="431.75" font-size="10.1" fill="#969696" textLength="49.5" lengthAdjust="spacingAndGlyphs" stroke="#fff" stroke-width="0.12" paint-order="fill">MUX_B_2</text><text x="402.2" y="419.9" font-size="10.1" fill="#969696" textLength="32.8" lengthAdjust="spacingAndGlyphs" stroke="#fff" stroke-width="0.12" paint-order="fill">XOR_6</text><rect x="674.5" y="474.5" width="64" height="64" fill="none" stroke="#444" stroke-width="1.05"/><line x1="706.5" y1="458.5" x2="706.5" y2="474.7" stroke="#1414ff" stroke-width="1.2"/><line x1="706.5" y1="538.3" x2="706.5" y2="554.5" stroke="#1414ff" stroke-width="1.2"/><polyline points="675.2,526.25 682.5,530.75 675.2,535.25" fill="none" stroke="#0000ff" stroke-width="1.5"/><text x="677.6" y="486.1" font-size="10.5" fill="#1414ff" stroke="#1414ff" stroke-width="0.1">D</text><text x="702.8" y="486.1" font-size="10.5" fill="#1414ff" stroke="#1414ff" stroke-width="0.1">S</text><text x="726.5" y="486.1" font-size="10.5" fill="#1414ff" stroke="#1414ff" stroke-width="0.1">Q</text><text x="702.6" y="534.1" font-size="10.5" fill="#1414ff" stroke="#1414ff" stroke-width="0.1">R</text><text x="726.5" y="534.1" font-size="10.5" fill="#1414ff" stroke="#1414ff" stroke-width="0.1">Q</text><line x1="727.5" y1="525.1" x2="734.5" y2="525.1" stroke="#1414ff" stroke-width="0.9"/><text x="726.4" y="468.2" font-size="10.1" fill="#969696" textLength="43" lengthAdjust="spacingAndGlyphs" stroke="#fff" stroke-width="0.12" paint-order="fill">D_FF_10</text><path d="M398.5,594.5 L407.5,594.5 Q427.5,594.5 439.5,614.5 Q427.5,634.5 407.5,634.5 L398.5,634.5 Q418.5,614.5 398.5,594.5 Z" fill="none" stroke="#000" stroke-width="2.0" stroke-linejoin="round"/><path d="M391.0,595.0 Q413.0,614.5 391.0,634.0" fill="none" stroke="#000" stroke-width="1.6"/><polyline points="530.75,607.25 594.5,638.0" fill="none" stroke="#111" stroke-width="1.6"/><polyline points="594.5,662.75 530.75,694.25" fill="none" stroke="#111" stroke-width="1.6"/><line x1="530.75" y1="606.75" x2="530.75" y2="694.75" stroke="#2a2a2a" stroke-width="1.3"/><line x1="594.5" y1="637.5" x2="594.5" y2="663.25" stroke="#2a2a2a" stroke-width="1.3"/><text x="534.5" y="642.1" font-size="10.5" fill="#1414ff" textLength="14.5" lengthAdjust="spacingAndGlyphs" stroke="#1414ff" stroke-width="0.1">w0</text><text x="534.5" y="666.1" font-size="10.5" fill="#1414ff" textLength="14.5" lengthAdjust="spacingAndGlyphs" stroke="#1414ff" stroke-width="0.1">w1</text><text x="587.6" y="653.7" font-size="10.5" fill="#1414ff" stroke="#1414ff" stroke-width="0.1">f</text><text x="556.5" y="673.3" font-size="10.5" fill="#1414ff" textLength="12" lengthAdjust="spacingAndGlyphs" stroke="#1414ff" stroke-width="0.1">S0</text><text x="537.5" y="599.75" font-size="10.1" fill="#969696" textLength="49.5" lengthAdjust="spacingAndGlyphs" stroke="#fff" stroke-width="0.12" paint-order="fill">MUX_B_3</text><text x="402.2" y="587.9" font-size="10.1" fill="#969696" textLength="32.8" lengthAdjust="spacingAndGlyphs" stroke="#fff" stroke-width="0.12" paint-order="fill">XOR_7</text><rect x="674.5" y="642.5" width="64" height="64" fill="none" stroke="#444" stroke-width="1.05"/><line x1="706.5" y1="626.5" x2="706.5" y2="642.7" stroke="#1414ff" stroke-width="1.2"/><line x1="706.5" y1="706.3" x2="706.5" y2="722.5" stroke="#1414ff" stroke-width="1.2"/><polyline points="675.2,694.25 682.5,698.75 675.2,703.25" fill="none" stroke="#0000ff" stroke-width="1.5"/><text x="677.6" y="654.1" font-size="10.5" fill="#1414ff" stroke="#1414ff" stroke-width="0.1">D</text><text x="702.8" y="654.1" font-size="10.5" fill="#1414ff" stroke="#1414ff" stroke-width="0.1">S</text><text x="726.5" y="654.1" font-size="10.5" fill="#1414ff" stroke="#1414ff" stroke-width="0.1">Q</text><text x="702.6" y="702.1" font-size="10.5" fill="#1414ff" stroke="#1414ff" stroke-width="0.1">R</text><text x="726.5" y="702.1" font-size="10.5" fill="#1414ff" stroke="#1414ff" stroke-width="0.1">Q</text><line x1="727.5" y1="693.1" x2="734.5" y2="693.1" stroke="#1414ff" stroke-width="0.9"/><text x="726.4" y="636.2" font-size="10.1" fill="#969696" textLength="43" lengthAdjust="spacingAndGlyphs" stroke="#fff" stroke-width="0.12" paint-order="fill">D_FF_11</text><path d="M206.5,222.5 L246.5,222.5 L246.5,244.0 A20,18.5 0 0 1 206.5,244.0 Z" fill="none" stroke="#000" stroke-width="2.0" stroke-linejoin="round"/><path d="M218.5,390.75 L258.5,390.75 L258.5,412.25 A20,18.5 0 0 1 218.5,412.25 Z" fill="none" stroke="#000" stroke-width="2.0" stroke-linejoin="round"/><path d="M230.5,558.75 L270.5,558.75 L270.5,580.25 A20,18.5 0 0 1 230.5,580.25 Z" fill="none" stroke="#000" stroke-width="2.0" stroke-linejoin="round"/><path d="M314.5,726.5 L335,726.5 A20,20 0 0 1 335,766.5 L314.5,766.5 Z" fill="none" stroke="#000" stroke-width="2.0" stroke-linejoin="round"/><text x="246.7" y="216" font-size="10.1" fill="#969696" textLength="40.3" lengthAdjust="spacingAndGlyphs" stroke="#fff" stroke-width="0.12" paint-order="fill">AND_13</text><text x="258.7" y="384" font-size="10.1" fill="#969696" textLength="40.3" lengthAdjust="spacingAndGlyphs" stroke="#fff" stroke-width="0.12" paint-order="fill">AND_14</text><text x="270.7" y="552" font-size="10.1" fill="#969696" textLength="40.3" lengthAdjust="spacingAndGlyphs" stroke="#fff" stroke-width="0.12" paint-order="fill">AND_15</text><text x="314.5" y="720" font-size="10.1" fill="#969696" textLength="40.3" lengthAdjust="spacingAndGlyphs" stroke="#fff" stroke-width="0.12" paint-order="fill">AND_16</text><rect x="26.5" y="174.5" width="40" height="40" fill="none" stroke="#333" stroke-width="1.15"/><polyline points="32.2,193.3 35.7,193.3 35.7,185.9 43.6,185.9 43.6,193.3 50.6,193.3 50.6,185.9 58,185.9 58,193.3 61,193.3" fill="none" stroke="#e85a5a" stroke-width="1.15"/><text x="33.1" y="208.8" font-size="9.6" fill="#1e1e1e" textLength="27.1" lengthAdjust="spacingAndGlyphs" stroke="#fff" stroke-width="0" paint-order="fill">10 Hz</text><text x="28.75" y="168" font-size="10.1" fill="#969696" textLength="35.8" lengthAdjust="spacingAndGlyphs" stroke="#fff" stroke-width="0.12" paint-order="fill">CLK_31</text><rect x="890.5" y="342.5" width="64" height="160" fill="none" stroke="#444" stroke-width="1.05"/><text x="893.5" y="354.1" font-size="10.5" fill="#1414ff" textLength="14.5" lengthAdjust="spacingAndGlyphs" stroke="#1414ff" stroke-width="0.1">w0</text><text x="893.5" y="378.1" font-size="10.5" fill="#1414ff" textLength="14.5" lengthAdjust="spacingAndGlyphs" stroke="#1414ff" stroke-width="0.1">w1</text><text x="893.5" y="402.1" font-size="10.5" fill="#1414ff" textLength="14.5" lengthAdjust="spacingAndGlyphs" stroke="#1414ff" stroke-width="0.1">w2</text><text x="893.5" y="426.1" font-size="10.5" fill="#1414ff" textLength="14.5" lengthAdjust="spacingAndGlyphs" stroke="#1414ff" stroke-width="0.1">w3</text><text x="951.5" y="354.1" font-size="10.5" fill="#1414ff" text-anchor="end" stroke="#1414ff" stroke-width="0.1">a</text><text x="951.5" y="378.1" font-size="10.5" fill="#1414ff" text-anchor="end" stroke="#1414ff" stroke-width="0.1">b</text><text x="951.5" y="402.1" font-size="10.5" fill="#1414ff" text-anchor="end" stroke="#1414ff" stroke-width="0.1">c</text><text x="951.5" y="426.1" font-size="10.5" fill="#1414ff" text-anchor="end" stroke="#1414ff" stroke-width="0.1">d</text><text x="951.5" y="450.1" font-size="10.5" fill="#1414ff" text-anchor="end" stroke="#1414ff" stroke-width="0.1">e</text><text x="951.5" y="474.1" font-size="10.5" fill="#1414ff" text-anchor="end" stroke="#1414ff" stroke-width="0.1">f</text><text x="951.5" y="498.1" font-size="10.5" fill="#1414ff" text-anchor="end" stroke="#1414ff" stroke-width="0.1">g</text><text x="897" y="335.6" font-size="10.1" fill="#969696" textLength="51" lengthAdjust="spacingAndGlyphs" stroke="#fff" stroke-width="0.12" paint-order="fill">BCD2S_29</text><rect x="1022.5" y="342.5" width="112.5" height="112" fill="none" stroke="#444" stroke-width="1.05"/><text x="1026" y="354.1" font-size="10.5" fill="#1414ff" stroke="#1414ff" stroke-width="0.1">a</text><text x="1026" y="378.1" font-size="10.5" fill="#1414ff" stroke="#1414ff" stroke-width="0.1">b</text><text x="1026" y="402.1" font-size="10.5" fill="#1414ff" stroke="#1414ff" stroke-width="0.1">c</text><text x="1026" y="426.1" font-size="10.5" fill="#1414ff" stroke="#1414ff" stroke-width="0.1">d</text><text x="1026" y="450.1" font-size="10.5" fill="#1414ff" stroke="#1414ff" stroke-width="0.1">e</text><text x="1054.5" y="450.1" font-size="10.5" fill="#1414ff" text-anchor="middle" stroke="#1414ff" stroke-width="0.1">f</text><text x="1078.5" y="450.1" font-size="10.5" fill="#1414ff" text-anchor="middle" stroke="#1414ff" stroke-width="0.1">g</text><text x="1102.5" y="450.1" font-size="10.5" fill="#1414ff" text-anchor="middle" stroke="#1414ff" stroke-width="0.1">dp</text><text x="1053.75" y="335.6" font-size="10.1" fill="#969696" textLength="50" lengthAdjust="spacingAndGlyphs" stroke="#fff" stroke-width="0.12" paint-order="fill">7_SEG_30</text><rect x="1045" y="362.4" width="67.4" height="72.2" fill="#262626"/><rect x="1055" y="372" width="46.5" height="52.5" fill="url(#bez)"/><line x1="1055.5" y1="425.3" x2="1102.5" y2="425.3" stroke="#6a6a6a" stroke-width="1.1"/><polygon points="1068,379 1070,376.5 1088,376.5 1089.3,378 1085.5,382 1070.8,382" fill="#ff0a0a" stroke="#163030" stroke-width="0.9" stroke-linejoin="round"/><polygon points="1066.5,380 1069.8,383 1068.5,393.5 1063.3,398.5 1062.8,396.5 1064.3,382.5" fill="#ff0a0a" stroke="#163030" stroke-width="0.9" stroke-linejoin="round"/><polygon points="1066.5,398.5 1069.5,395.5 1085,395.5 1087,398 1084.5,401.5 1069.5,401.5" fill="#ff0a0a" stroke="#163030" stroke-width="0.9" stroke-linejoin="round"/><polygon points="1091,400 1091.2,401.5 1089.8,414.5 1086.5,418.5 1083.8,415.5 1085,403.5 1088.5,400.5" fill="#ff0a0a" stroke="#163030" stroke-width="0.9" stroke-linejoin="round"/><polygon points="1064.5,419.5 1068.5,415.5 1083.5,415.5 1086,419 1084,421 1066,421" fill="#ff0a0a" stroke="#163030" stroke-width="0.9" stroke-linejoin="round"/><text x="108.9" y="90.8" font-size="12.4" fill="#9a3cff" textLength="34.5" lengthAdjust="spacingAndGlyphs" stroke="#fff" stroke-width="0.12" paint-order="fill">Enable</text><text x="129.3" y="162.8" font-size="12.4" fill="#9a3cff" textLength="14" lengthAdjust="spacingAndGlyphs" stroke="#fff" stroke-width="0.12" paint-order="fill">D0</text><text x="129.3" y="330.8" font-size="12.4" fill="#9a3cff" textLength="14" lengthAdjust="spacingAndGlyphs" stroke="#fff" stroke-width="0.12" paint-order="fill">D1</text><text x="129.3" y="498.8" font-size="12.4" fill="#9a3cff" textLength="14" lengthAdjust="spacingAndGlyphs" stroke="#fff" stroke-width="0.12" paint-order="fill">D2</text><text x="129.3" y="666.8" font-size="12.4" fill="#9a3cff" textLength="14" lengthAdjust="spacingAndGlyphs" stroke="#fff" stroke-width="0.12" paint-order="fill">D3</text><text x="119.5" y="702.8" font-size="12.4" fill="#9a3cff" textLength="23.8" lengthAdjust="spacingAndGlyphs" stroke="#fff" stroke-width="0.12" paint-order="fill">Load</text><text x="868.5" y="750.7" font-size="12.4" fill="#9a3cff" textLength="67.9" lengthAdjust="spacingAndGlyphs" stroke="#fff" stroke-width="0.12" paint-order="fill">Output Carry</text><rect x="172.0" y="81.0" width="14" height="11.2" fill="#707070" stroke="#5e5e5e" stroke-width="0.8"/><circle cx="166.5" cy="86.5" r="6.6" fill="none" stroke="#f07a7a" stroke-width="2.6"/><circle cx="166.5" cy="86.5" r="5" fill="url(#tgDark)"/><path d="M163.5,86.5 L169.5,86.5 L168.7,74.5 L164.3,74.5 Z" fill="url(#lev)"/><ellipse cx="166.5" cy="72.9" rx="3.8" ry="3.2" fill="url(#knobD)"/><rect x="172.0" y="153.0" width="14" height="11.2" fill="#707070" stroke="#5e5e5e" stroke-width="0.8"/><circle cx="166.5" cy="158.5" r="6.9" fill="none" stroke="#8c1515" stroke-width="2.1"/><circle cx="166.5" cy="158.5" r="5.2" fill="url(#tgLight)"/><path d="M163.5,158.5 L169.5,158.5 L168.7,169.5 L164.3,169.5 Z" fill="url(#lev)"/><ellipse cx="166.5" cy="172.3" rx="3.9" ry="3.4" fill="url(#knob)"/><rect x="172.0" y="321.0" width="14" height="11.2" fill="#707070" stroke="#5e5e5e" stroke-width="0.8"/><circle cx="166.5" cy="326.5" r="6.9" fill="none" stroke="#8c1515" stroke-width="2.1"/><circle cx="166.5" cy="326.5" r="5.2" fill="url(#tgLight)"/><path d="M163.5,326.5 L169.5,326.5 L168.7,337.5 L164.3,337.5 Z" fill="url(#lev)"/><ellipse cx="166.5" cy="340.3" rx="3.9" ry="3.4" fill="url(#knob)"/><rect x="172.0" y="489.0" width="14" height="11.2" fill="#707070" stroke="#5e5e5e" stroke-width="0.8"/><circle cx="166.5" cy="494.5" r="6.9" fill="none" stroke="#8c1515" stroke-width="2.1"/><circle cx="166.5" cy="494.5" r="5.2" fill="url(#tgLight)"/><path d="M163.5,494.5 L169.5,494.5 L168.7,505.5 L164.3,505.5 Z" fill="url(#lev)"/><ellipse cx="166.5" cy="508.3" rx="3.9" ry="3.4" fill="url(#knob)"/><rect x="172.0" y="657.0" width="14" height="11.2" fill="#707070" stroke="#5e5e5e" stroke-width="0.8"/><circle cx="166.5" cy="662.5" r="6.9" fill="none" stroke="#8c1515" stroke-width="2.1"/><circle cx="166.5" cy="662.5" r="5.2" fill="url(#tgLight)"/><path d="M163.5,662.5 L169.5,662.5 L168.7,673.5 L164.3,673.5 Z" fill="url(#lev)"/><ellipse cx="166.5" cy="676.3" rx="3.9" ry="3.4" fill="url(#knob)"/><rect x="172.0" y="693.0" width="14" height="11.2" fill="#707070" stroke="#5e5e5e" stroke-width="0.8"/><circle cx="166.5" cy="698.5" r="6.9" fill="none" stroke="#8c1515" stroke-width="2.1"/><circle cx="166.5" cy="698.5" r="5.2" fill="url(#tgLight)"/><path d="M163.5,698.5 L169.5,698.5 L168.7,709.5 L164.3,709.5 Z" fill="url(#lev)"/><ellipse cx="166.5" cy="712.3" rx="3.9" ry="3.4" fill="url(#knob)"/><rect x="819.3" y="738" width="3" height="17" fill="#606060"/><rect x="821" y="734.8" width="34" height="23.6" rx="1.5" fill="#b4b4b4"/><rect x="823.5" y="737.3" width="29" height="18.6" rx="1.5" fill="url(#ledg)"/><line x1="826" y1="739.3" x2="849" y2="739.3" stroke="#8d8b6c" stroke-width="1.2"/>
<path d="M815,13.5 L1235,13.5 A33,33 0 0 1 1268,46.5 L1268,151 A15,15 0 0 1 1253,166.3 L1200.6,166.3 A15,15 0 0 1 1185.6,151.3 L1185.6,111 A15,15 0 0 0 1170.6,96 L815,96 A15,15 0 0 1 800,81 L800,28.5 A15,15 0 0 1 815,13.5 Z" fill="rgba(214,214,214,0.78)"/><rect x="877" y="27.4" width="3.8" height="54.4" rx="1.9" fill="#bdbdbd"/><rect x="1108.7" y="27.9" width="3.8" height="53.2" rx="1.9" fill="#bdbdbd"/><mask id="wm"><rect x="800" y="20" width="60" height="60" fill="#fff"/><polygon points="826.7,36.3 832.7,43.6 832.4,48.6 825.6,49.6 818.9,44.4 810,36 822,26" fill="#000" stroke="#000" stroke-width="0.8" stroke-linejoin="round"/></mask><g fill="#6b6b6b"><circle cx="829" cy="45.8" r="9.9" mask="url(#wm)"/><line x1="835" y1="52.5" x2="852.6" y2="69.3" stroke="#6b6b6b" stroke-width="6.4" stroke-linecap="round"/><circle cx="852.4" cy="69.5" r="1.7" fill="#fff"/><line x1="836.5" y1="56" x2="852" y2="40.5" stroke="#b35a0a" stroke-width="1.7"/><path d="M854.6,37.5 L853.8,41.6 L852,41.2 L850.6,39.6 L851,38.2 Z" fill="#b35a0a"/><line x1="822.5" y1="68" x2="835.5" y2="56.5" stroke="#e6e6e6" stroke-width="8" stroke-linecap="round"/><line x1="822.5" y1="68" x2="835.5" y2="56.5" stroke="#b35a0a" stroke-width="5.8" stroke-linecap="round"/></g><rect x="902" y="37.8" width="25.8" height="31.5" rx="3.5" fill="#bdbdbd"/><rect x="906" y="33.5" width="17.5" height="6.3" rx="1.5" fill="#e1e1e1"/><rect x="908" y="35.1" width="13.5" height="2.7" rx="0.8" fill="#bdbdbd"/><polygon points="918.2,46.2 933.2,46.2 938.3,51.3 938.3,73.8 918.2,73.8" fill="#bdbdbd" stroke="#e1e1e1" stroke-width="4.4" paint-order="stroke" stroke-linejoin="miter"/><polygon points="976.9,35.7 993,35.7 998.5,41.2 998.5,64.8 976.9,64.8" fill="#bdbdbd"/><polygon points="991,44.1 1007.5,44.1 1012.7,49.3 1012.7,73.5 991,73.5" fill="#bdbdbd" stroke="#e1e1e1" stroke-width="4" paint-order="stroke"/><g fill="none" stroke="#bdbdbd" stroke-width="2.3"><ellipse cx="1057.3" cy="43.2" rx="5.6" ry="4.9" transform="rotate(32 1057.3 43.2)"/><ellipse cx="1057.3" cy="65.8" rx="5.6" ry="4.9" transform="rotate(-32 1057.3 65.8)"/></g><polygon points="1058.2,49.0 1087.5,72.6 1088.1,71.8 1060.8,46.0" fill="#bdbdbd"/><polygon points="1067.3,54.8 1088.1,37.6 1087.5,36.8 1064.7,51.2" fill="#bdbdbd"/><line x1="1059.6" y1="60.8" x2="1064.2" y2="56.6" stroke="#bdbdbd" stroke-width="3"/><circle cx="1065.1" cy="54.4" r="1.2" fill="#f2f2f2"/><path d="M1135,35 h33 l3.3,3.3 v33.7 a2,2 0 0 1 -2,2 h-34.4 a2,2 0 0 1 -2,-2 v-35 a2,2 0 0 1 2,-2 z" fill="#bdbdbd"/><rect x="1143.8" y="35" width="17.8" height="13.1" rx="1.5" fill="#e4e4e4"/><rect x="1154.4" y="37.3" width="4" height="8.6" fill="#bdbdbd"/><rect x="1137.2" y="51.9" width="29.6" height="20.2" rx="1.5" fill="#e4e4e4"/><circle cx="1226.8" cy="36.5" r="5.4" fill="#bdbdbd"/><circle cx="1226.8" cy="54.5" r="5.4" fill="#bdbdbd"/><circle cx="1226.8" cy="72.5" r="5.4" fill="#bdbdbd"/><circle cx="1226.5" cy="129.4" r="31.5" fill="url(#glow)"/><rect x="1209.1" y="111.9" width="34.9" height="35" fill="#e0e0e0"/><path d="M0,506.6 L67.6,506.6 A19.05,19.05 0 0 1 67.6,544.7 L0,544.7 Z" fill="rgba(214,214,214,0.78)"/><path d="M0,561.5 L67.6,561.5 A19.1,19.1 0 0 1 67.6,599.7 L0,599.7 Z" fill="rgba(214,214,214,0.78)"/><rect x="40.2" y="517.2" width="26.1" height="18.3" rx="1.5" fill="#b4b4b4"/><rect x="42.7" y="519.7" width="21.1" height="13.3" rx="1.5" fill="url(#ledg)"/><line x1="45.2" y1="521.7" x2="60.30000000000001" y2="521.7" stroke="#8d8b6c" stroke-width="1.2"/><circle cx="53.4" cy="580.5" r="6.9" fill="none" stroke="#f07a7a" stroke-width="2.1"/><circle cx="53.4" cy="580.5" r="5.2" fill="url(#tgLight)"/><path d="M50.4,580.5 L56.4,580.5 L55.6,591.5 L51.199999999999996,591.5 Z" fill="url(#lev)"/><ellipse cx="53.4" cy="594.3" rx="3.9" ry="3.4" fill="url(#knob)"/><path d="M373.5,784.1 L906.5,784.1 A16,16 0 0 1 922.5,800.1 L357.5,800.1 A16,16 0 0 1 373.5,784.1 Z" fill="rgba(214,214,214,0.78)"/><text x="581.7" y="797" font-size="13.3" fill="#1a1a1a" textLength="121.9" lengthAdjust="spacingAndGlyphs">Counter Parallel.dcd</text>
</svg>
</body></html>
